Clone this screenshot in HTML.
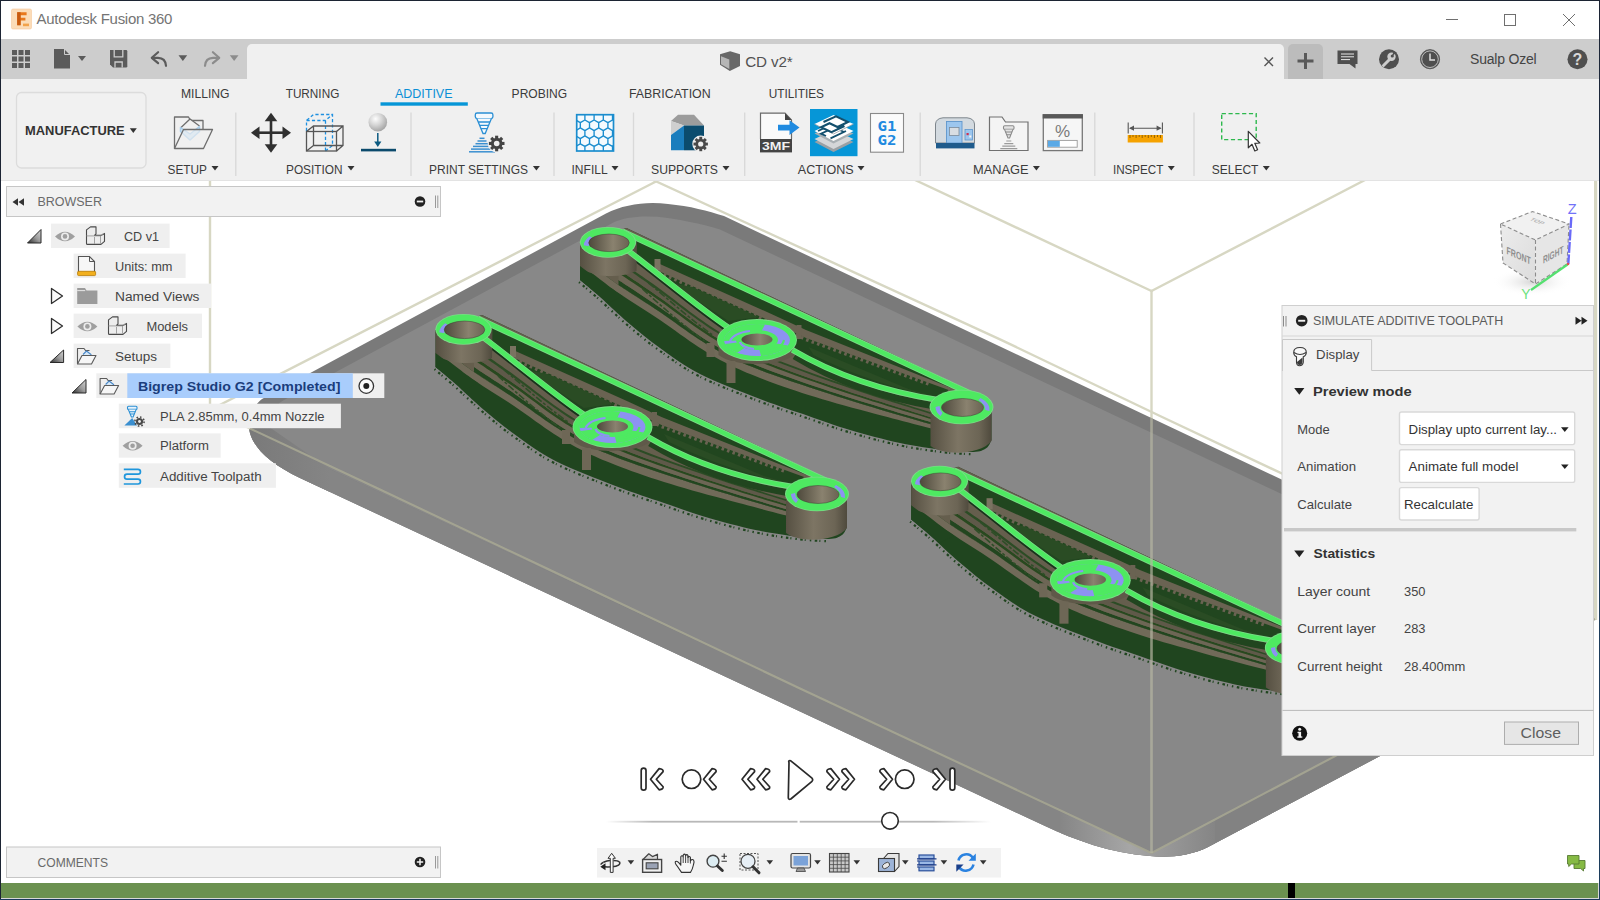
<!DOCTYPE html>
<html lang="en">
<head>
<meta charset="utf-8">
<title>Autodesk Fusion 360</title>
<style>
*{box-sizing:border-box;margin:0;padding:0}
html,body{width:1600px;height:900px;overflow:hidden;background:#fff}
body{font-family:"Liberation Sans",Arial,sans-serif;font-size:12px;color:#3c3c3c;position:relative}
.abs{position:absolute}
#win{position:absolute;left:0;top:0;width:1600px;height:900px;overflow:hidden;background:#fff}
#titlebar{position:absolute;left:1px;top:1px;width:1598px;height:38px;background:#fff}
#titletext{position:absolute;left:35.500px;top:9px;font-size:15px;color:#747474;white-space:nowrap;letter-spacing:-0.280px}
#qat{position:absolute;left:1px;top:39px;width:1598px;height:40px;background:#cdcdcd}
#doctab{position:absolute;left:246px;top:5px;width:1037px;height:35px;background:#f0f0f0;border-radius:5px 5px 0 0}
#toolbar{position:absolute;left:1px;top:79px;width:1598px;height:101px;background:#f0f0f0}
#viewport{position:absolute;left:1px;top:180px;width:1598px;height:703px;background:#fff;overflow:hidden}
#greenbar{position:absolute;left:1px;top:883px;width:1597px;height:15px;background:#6b9150}
.tlabel{position:absolute;font-size:12.5px;color:#3a3a3a;white-space:nowrap;letter-spacing:-0.2px}
.tab{position:absolute;top:7px;font-size:12.5px;color:#3a3a3a;white-space:nowrap;letter-spacing:-0.2px}
.sep{position:absolute;top:34px;width:1px;height:63px;background:#d6d6d6}
.caret{display:inline-block;width:0;height:0;border-left:3.5px solid transparent;border-right:3.5px solid transparent;border-top:5px solid #333;vertical-align:middle;margin-left:3px;position:relative;top:-1px}
</style>
</head>
<body>
<div id="win">
<!-- window borders -->
<div class="abs" style="left:0;top:0;width:1600px;height:1px;background:#1c2433"></div>
<div class="abs" style="left:0;top:0;width:1px;height:900px;background:#1c2433"></div>
<div class="abs" style="left:1598px;top:883px;width:1px;height:16px;background:#d8d8d8"></div>
<div class="abs" style="left:1599px;top:0;width:1px;height:900px;background:linear-gradient(#1c2333,#1c2a40 20%,#1c3c5c 60%,#1c3c5c)"></div>
<div class="abs" style="left:1px;top:898px;width:1598px;height:1px;background:#d8d8d8"></div>
<div class="abs" style="left:0;top:899px;width:1600px;height:1px;background:#1c3a5e"></div>

<div id="titlebar">
<svg class="abs" style="left:10px;top:7px" width="22" height="22" viewBox="0 0 22 22">
  <rect x="0.5" y="1" width="20" height="20" rx="1.5" fill="#fbdcb8"/>
  <rect x="0.5" y="1" width="20" height="20" rx="1.5" fill="none" stroke="#f6c89a" stroke-width="0.6"/>
  <path d="M6.2,4.2 L15.6,4.2 L15.6,7.2 L9.6,7.2 L9.6,9.8 L14.4,9.8 L14.4,12.6 L9.6,12.6 L9.6,17.2 L6.2,17.2 Z" fill="#e8781c"/>
  <path d="M6.2,4.2 L9.6,4.2 L9.6,17.2 L6.2,17.2 Z" fill="#c75a10"/>
  <rect x="12" y="15.6" width="6" height="2.6" fill="#f2a24a"/>
</svg>
<div id="titletext">Autodesk Fusion 360</div>
<svg class="abs" style="left:1440px;top:7px" width="150" height="24" viewBox="0 0 150 24" fill="none" stroke="#6f6f6f" stroke-width="1">
  <path d="M5,11.5 H17"/>
  <rect x="63.5" y="6.5" width="11" height="11"/>
  <path d="M122,6 L134,18 M134,6 L122,18"/>
</svg>

</div>

<div id="qat">
<div id="doctab"></div>
<div class="abs" style="left:1287px;top:5px;width:35px;height:35px;background:#bcbcbc;border-radius:5px 5px 0 0"></div>
<svg class="abs" style="left:0;top:0" width="1598" height="40" viewBox="1 39 1598 40">
  <!-- grid -->
  <g fill="#5b5b5b">
    <rect x="12" y="50" width="5" height="5"/><rect x="18.5" y="50" width="5" height="5"/><rect x="25" y="50" width="5" height="5"/>
    <rect x="12" y="56.5" width="5" height="5"/><rect x="18.5" y="56.5" width="5" height="5"/><rect x="25" y="56.5" width="5" height="5"/>
    <rect x="12" y="63" width="5" height="5"/><rect x="18.5" y="63" width="5" height="5"/><rect x="25" y="63" width="5" height="5"/>
  </g>
  <!-- file -->
  <path d="M54,49 H64 L70,55 V68.5 H54 Z" fill="#5b5b5b"/>
  <path d="M64.5,49 V54.5 H70" fill="none" stroke="#cdcdcd" stroke-width="1"/>
  <path d="M78,56 h8 l-4,5 z" fill="#5b5b5b"/>
  <!-- save -->
  <path d="M110,50 H126 Q127.300,50 127.300,51.300 V66.300 Q127.300,67.600 126,67.600 H113 L110,64.600 Z" fill="#5b5b5b"/>
  <path d="M114.200,50 V56.800 H122.800 V50" fill="none" stroke="#cdcdcd" stroke-width="1.300"/>
  <path d="M115,67.600 V62 H122.200 V67.600" fill="none" stroke="#cdcdcd" stroke-width="1.300"/>
  <!-- undo -->
  <path d="M158.100,52.200 L151.800,57.800 L158.100,63.200" fill="none" stroke="#5b5b5b" stroke-width="2.200" stroke-linecap="round" stroke-linejoin="round"/>
  <path d="M152.500,57.800 H158 Q165.500,58 166,65.800" fill="none" stroke="#5b5b5b" stroke-width="2.200" stroke-linecap="round"/>
  <path d="M178.500,55.200 h8.700 l-4.350,5.800 z" fill="#5b5b5b"/>
  <!-- redo -->
  <path d="M212.900,52.200 L219.200,57.800 L212.900,63.200" fill="none" stroke="#8c8c8c" stroke-width="2.200" stroke-linecap="round" stroke-linejoin="round"/>
  <path d="M218.500,57.800 H213 Q205.500,58 205,65.800" fill="none" stroke="#8c8c8c" stroke-width="2.200" stroke-linecap="round"/>
  <path d="M229.800,55.200 h8.700 l-4.350,5.800 z" fill="#8c8c8c"/>
  <!-- doc cube icon -->
  <path d="M720,54.300 L730.200,51.300 L740,54.300 V66 L729.800,70.900 L720,64.800 Z" fill="#686868"/>
  <path d="M721,56.300 L729.300,59.600 V69 L721,64.200 Z" fill="#b6b6b6"/>
  <!-- close x -->
  <path d="M1264.500,57.500 L1273,66 M1273,57.500 L1264.500,66" stroke="#555" stroke-width="1.4" fill="none"/>
  <!-- plus -->
  <path d="M1297.500,61 H1313.500 M1305.500,53 V69" stroke="#595959" stroke-width="3" fill="none"/>
  <!-- comment -->
  <path d="M1337.500,50.500 H1357.500 V64 H1355.500 V68.500 L1349.500,64 H1337.500 Z" fill="#4f4f4f"/>
  <path d="M1341,54 H1354 M1341,56.800 H1354 M1341,59.600 H1350" stroke="#e8e8e8" stroke-width="1" fill="none"/>
  <!-- job status (wrench circle) -->
  <circle cx="1389" cy="59.200" r="10" fill="#4f4f4f"/>
  <path d="M1383.500,65.500 L1389.500,59.500" stroke="#cdcdcd" stroke-width="3" stroke-linecap="round"/>
  <circle cx="1391.500" cy="56.800" r="4.200" fill="#cdcdcd"/>
  <path d="M1391.500,56.800 L1396.500,52.500 L1394,51 Z" fill="#4f4f4f"/>
  <circle cx="1392.300" cy="56" r="1.600" fill="#4f4f4f"/>
  <!-- clock -->
  <circle cx="1430" cy="59.200" r="9.600" fill="#4f4f4f" stroke="#4f4f4f" stroke-width="0.800"/>
  <circle cx="1430" cy="59.200" r="8.300" fill="none" stroke="#cdcdcd" stroke-width="0.900"/>
  <path d="M1430,53.500 V60 H1435" stroke="#e0e0e0" stroke-width="1.500" fill="none"/>
  <!-- help -->
  <circle cx="1577.500" cy="59.200" r="10" fill="#4f4f4f"/>
  <text x="1577.500" y="65" text-anchor="middle" font-family="Liberation Sans, sans-serif" font-weight="bold" font-size="16" fill="#d8d8d8">?</text>
</svg>
<div class="abs" style="left:744.300px;top:14px;font-size:15.200px;color:#525252;letter-spacing:-0.150px;white-space:nowrap" id="doctitle">CD v2*</div>
<div class="abs" style="left:1469px;top:12px;font-size:14px;color:#444;white-space:nowrap;letter-spacing:-0.2px" id="username">Sualp Ozel</div>

</div>

<div id="toolbar">
<svg class="abs" style="left:0;top:0" width="1598" height="101" viewBox="1 79 1598 101" font-family="Liberation Sans, Arial, sans-serif">
<rect x="16.500" y="92.500" width="129.500" height="75.500" rx="5" fill="#f1f1f1" stroke="#dcdcdc" stroke-width="1.300"/>
<text x="25.0" y="135.2" font-size="13" font-weight="bold" fill="#333" textLength="99.7" lengthAdjust="spacingAndGlyphs">MANUFACTURE</text>
<path d="M129.8,128.3 h7 l-3.5,4.600 z" fill="#333"/>
<text x="180.9" y="97.9" font-size="13" font-weight="normal" fill="#3b3b3b" textLength="48.7" lengthAdjust="spacingAndGlyphs">MILLING</text>
<text x="285.7" y="97.9" font-size="13" font-weight="normal" fill="#3b3b3b" textLength="53.6" lengthAdjust="spacingAndGlyphs">TURNING</text>
<text x="395.0" y="97.9" font-size="13" font-weight="normal" fill="#0a8fd6" textLength="57.5" lengthAdjust="spacingAndGlyphs">ADDITIVE</text>
<text x="511.6" y="97.9" font-size="13" font-weight="normal" fill="#3b3b3b" textLength="55.6" lengthAdjust="spacingAndGlyphs">PROBING</text>
<text x="628.9" y="97.9" font-size="13" font-weight="normal" fill="#3b3b3b" textLength="81.8" lengthAdjust="spacingAndGlyphs">FABRICATION</text>
<text x="768.7" y="97.9" font-size="13" font-weight="normal" fill="#3b3b3b" textLength="55.3" lengthAdjust="spacingAndGlyphs">UTILITIES</text>
<rect x="380.500" y="102.300" width="87.300" height="3.400" fill="#0696d7"/>
<rect x="235.1" y="112.500" width="1.400" height="63.500" fill="#d9d9d9"/>
<rect x="410.3" y="112.500" width="1.400" height="63.500" fill="#d9d9d9"/>
<rect x="553.3" y="112.500" width="1.400" height="63.500" fill="#d9d9d9"/>
<rect x="632.8" y="112.500" width="1.400" height="63.500" fill="#d9d9d9"/>
<rect x="744.0" y="112.500" width="1.400" height="63.500" fill="#d9d9d9"/>
<rect x="919.5" y="112.500" width="1.400" height="63.500" fill="#d9d9d9"/>
<rect x="1094.1" y="112.500" width="1.400" height="63.500" fill="#d9d9d9"/>
<rect x="1193.3" y="112.500" width="1.400" height="63.500" fill="#d9d9d9"/>
<text x="167.5" y="174.2" font-size="13" font-weight="normal" fill="#3b3b3b" textLength="39.4" lengthAdjust="spacingAndGlyphs">SETUP</text>
<path d="M211.5,165.9 h7 l-3.5,4.600 z" fill="#333"/>
<text x="286.0" y="174.2" font-size="13" font-weight="normal" fill="#3b3b3b" textLength="56.6" lengthAdjust="spacingAndGlyphs">POSITION</text>
<path d="M347.5,165.9 h7 l-3.5,4.600 z" fill="#333"/>
<text x="429.0" y="174.2" font-size="13" font-weight="normal" fill="#3b3b3b" textLength="99.0" lengthAdjust="spacingAndGlyphs">PRINT SETTINGS</text>
<path d="M532.9,165.9 h7 l-3.5,4.600 z" fill="#333"/>
<text x="571.5" y="174.2" font-size="13" font-weight="normal" fill="#3b3b3b" textLength="36.1" lengthAdjust="spacingAndGlyphs">INFILL</text>
<path d="M611.5,165.9 h7 l-3.5,4.600 z" fill="#333"/>
<text x="651.0" y="174.2" font-size="13" font-weight="normal" fill="#3b3b3b" textLength="67.0" lengthAdjust="spacingAndGlyphs">SUPPORTS</text>
<path d="M722.5,165.9 h7 l-3.5,4.600 z" fill="#333"/>
<text x="797.8" y="174.2" font-size="13" font-weight="normal" fill="#3b3b3b" textLength="55.9" lengthAdjust="spacingAndGlyphs">ACTIONS</text>
<path d="M857.5,165.9 h7 l-3.5,4.600 z" fill="#333"/>
<text x="973.0" y="174.2" font-size="13" font-weight="normal" fill="#3b3b3b" textLength="55.6" lengthAdjust="spacingAndGlyphs">MANAGE</text>
<path d="M1032.9,165.9 h7 l-3.5,4.600 z" fill="#333"/>
<text x="1112.9" y="174.2" font-size="13" font-weight="normal" fill="#3b3b3b" textLength="50.5" lengthAdjust="spacingAndGlyphs">INSPECT</text>
<path d="M1167.8,165.9 h7 l-3.5,4.600 z" fill="#333"/>
<text x="1211.7" y="174.2" font-size="13" font-weight="normal" fill="#3b3b3b" textLength="46.7" lengthAdjust="spacingAndGlyphs">SELECT</text>
<path d="M1262.8,165.9 h7 l-3.5,4.600 z" fill="#333"/>
<g fill="none" stroke="#6e6e6e" stroke-width="1.300" stroke-linejoin="round">
<path d="M174.500,148.500 V117 H188.500 L190.500,120.500 H203 V129.500"/>
<path d="M181,127.500 L190,119 L199.500,126" fill="#f0f0f0"/>
<path d="M180.500,127.500 V131.500 L190,140 L199.500,131.500 V126.500 L190,134 Z" fill="#cfe3f2" stroke="#a9cdea" stroke-width="1.500"/>
<path d="M174.500,148.500 L183.500,129.500 H212.500 L203.500,148.500 Z" fill="#f0f0f0" fill-opacity="0.550"/>
</g>
<g fill="#303030">
<rect x="257.0" y="131.4" width="28" height="2.600"/>
<rect x="269.7" y="118.7" width="2.600" height="28"/>
<path d="M251.0,132.7 l8.500,-6.300 v12.600 z"/>
<path d="M291.0,132.7 l-8.500,-6.300 v12.600 z"/>
<path d="M271.0,112.7 l-6.300,8.500 h12.600 z"/>
<path d="M271.0,152.7 l-6.300,-8.500 h12.600 z"/>
</g>
<g fill="none" stroke="#1e90e0" stroke-width="1.300" stroke-dasharray="3.200 2.200">
<path d="M306.500,131 V120.500 L313.500,114.500 H332.500 V145.500 L325.500,151"/>
<path d="M306.500,120.500 H325.500 L332.500,114.500 M325.500,120.500 V151"/>
</g>
<g fill="none" stroke="#555" stroke-width="1.300">
<rect x="306.500" y="131.500" width="30" height="19.500"/>
<path d="M306.500,131.500 L313.500,126 H343 V145.500 L336.500,151 M343,126 L336.500,131.500 M313.500,126 V145.500 H343 M313.500,145.500 L306.500,151"/>
</g>
<defs><radialGradient id="ballg" cx="0.380" cy="0.320" r="0.700"><stop offset="0" stop-color="#fdfdfd"/><stop offset="0.500" stop-color="#d4d4d4"/><stop offset="1" stop-color="#a4a4a4"/></radialGradient></defs>
<circle cx="377.800" cy="122.200" r="9.300" fill="url(#ballg)"/>
<path d="M377.800,133 V145" stroke="#0b5a80" stroke-width="1.500"/>
<path d="M374.200,141.500 L377.800,147 L381.400,141.500 Z" fill="#0b5a80"/>
<rect x="361" y="148.800" width="35" height="2.600" fill="#0b4a6c"/>
<g fill="none" stroke="#2b8fd4" stroke-width="1.300">
<rect x="475.300" y="113" width="17.600" height="5.600" rx="1.800" fill="#f4f9fd"/>
<path d="M476.800,118.600 L483,133.500 H485.200 L491.400,118.600" fill="#f4f9fd"/>
<path d="M478.300,122 H489.900 M479.700,125.300 H488.500 M481.100,128.600 H487.100"/>
</g>
<g stroke="#3a8fd0" stroke-width="1.500">
<path d="M479.5,138.3 h5.0"/>
<path d="M477.5,141.0 h9.0"/>
<path d="M475.5,143.7 h13.0"/>
<path d="M473.0,146.4 h18.0"/>
<path d="M471.0,149.1 h22.0"/>
<path d="M469.0,151.8 h26.0"/>
</g>
<circle cx="496.7" cy="143.5" r="9.0" fill="#f0f0f0"/>
<g fill="#444">
<circle cx="496.7" cy="143.5" r="5.8"/>
<rect x="495.1" y="135.7" width="3.1" height="15.6" transform="rotate(0 496.7 143.5)"/>
<rect x="495.1" y="135.7" width="3.1" height="15.6" transform="rotate(45 496.7 143.5)"/>
<rect x="495.1" y="135.7" width="3.1" height="15.6" transform="rotate(90 496.7 143.5)"/>
<rect x="495.1" y="135.7" width="3.1" height="15.6" transform="rotate(135 496.7 143.5)"/>




</g>
<circle cx="496.7" cy="143.5" r="2.8" fill="#f0f0f0"/>
<defs><clipPath id="hexclip"><rect x="576.700" y="114.700" width="36.800" height="36.300"/></clipPath></defs>
<rect x="576.700" y="114.700" width="36.800" height="36.300" fill="#f4fafe"/>
<path d="M580.30,111.99 L575.70,114.64 L571.10,111.99 L571.10,106.68 L575.70,104.02 L580.30,106.68 Z M589.50,111.99 L584.90,114.64 L580.30,111.99 L580.30,106.68 L584.90,104.02 L589.50,106.68 Z M598.70,111.99 L594.10,114.64 L589.50,111.99 L589.50,106.68 L594.10,104.02 L598.70,106.68 Z M607.90,111.99 L603.30,114.64 L598.70,111.99 L598.70,106.68 L603.30,104.02 L607.90,106.68 Z M617.10,111.99 L612.50,114.64 L607.90,111.99 L607.90,106.68 L612.50,104.02 L617.10,106.68 Z M626.30,111.99 L621.70,114.64 L617.10,111.99 L617.10,106.68 L621.70,104.02 L626.30,106.68 Z M635.50,111.99 L630.90,114.64 L626.30,111.99 L626.30,106.68 L630.90,104.02 L635.50,106.68 Z M575.70,119.96 L571.10,122.61 L566.50,119.96 L566.50,114.64 L571.10,111.99 L575.70,114.64 Z M584.90,119.96 L580.30,122.61 L575.70,119.96 L575.70,114.64 L580.30,111.99 L584.90,114.64 Z M594.10,119.96 L589.50,122.61 L584.90,119.96 L584.90,114.64 L589.50,111.99 L594.10,114.64 Z M603.30,119.96 L598.70,122.61 L594.10,119.96 L594.10,114.64 L598.70,111.99 L603.30,114.64 Z M612.50,119.96 L607.90,122.61 L603.30,119.96 L603.30,114.64 L607.90,111.99 L612.50,114.64 Z M621.70,119.96 L617.10,122.61 L612.50,119.96 L612.50,114.64 L617.10,111.99 L621.70,114.64 Z M630.90,119.96 L626.30,122.61 L621.70,119.96 L621.70,114.64 L626.30,111.99 L630.90,114.64 Z M580.30,127.92 L575.70,130.58 L571.10,127.92 L571.10,122.61 L575.70,119.96 L580.30,122.61 Z M589.50,127.92 L584.90,130.58 L580.30,127.92 L580.30,122.61 L584.90,119.96 L589.50,122.61 Z M598.70,127.92 L594.10,130.58 L589.50,127.92 L589.50,122.61 L594.10,119.96 L598.70,122.61 Z M607.90,127.92 L603.30,130.58 L598.70,127.92 L598.70,122.61 L603.30,119.96 L607.90,122.61 Z M617.10,127.92 L612.50,130.58 L607.90,127.92 L607.90,122.61 L612.50,119.96 L617.10,122.61 Z M626.30,127.92 L621.70,130.58 L617.10,127.92 L617.10,122.61 L621.70,119.96 L626.30,122.61 Z M635.50,127.92 L630.90,130.58 L626.30,127.92 L626.30,122.61 L630.90,119.96 L635.50,122.61 Z M575.70,135.89 L571.10,138.55 L566.50,135.89 L566.50,130.58 L571.10,127.92 L575.70,130.58 Z M584.90,135.89 L580.30,138.55 L575.70,135.89 L575.70,130.58 L580.30,127.92 L584.90,130.58 Z M594.10,135.89 L589.50,138.55 L584.90,135.89 L584.90,130.58 L589.50,127.92 L594.10,130.58 Z M603.30,135.89 L598.70,138.55 L594.10,135.89 L594.10,130.58 L598.70,127.92 L603.30,130.58 Z M612.50,135.89 L607.90,138.55 L603.30,135.89 L603.30,130.58 L607.90,127.92 L612.50,130.58 Z M621.70,135.89 L617.10,138.55 L612.50,135.89 L612.50,130.58 L617.10,127.92 L621.70,130.58 Z M630.90,135.89 L626.30,138.55 L621.70,135.89 L621.70,130.58 L626.30,127.92 L630.90,130.58 Z M580.30,143.86 L575.70,146.51 L571.10,143.86 L571.10,138.55 L575.70,135.89 L580.30,138.55 Z M589.50,143.86 L584.90,146.51 L580.30,143.86 L580.30,138.55 L584.90,135.89 L589.50,138.55 Z M598.70,143.86 L594.10,146.51 L589.50,143.86 L589.50,138.55 L594.10,135.89 L598.70,138.55 Z M607.90,143.86 L603.30,146.51 L598.70,143.86 L598.70,138.55 L603.30,135.89 L607.90,138.55 Z M617.10,143.86 L612.50,146.51 L607.90,143.86 L607.90,138.55 L612.50,135.89 L617.10,138.55 Z M626.30,143.86 L621.70,146.51 L617.10,143.86 L617.10,138.55 L621.70,135.89 L626.30,138.55 Z M635.50,143.86 L630.90,146.51 L626.30,143.86 L626.30,138.55 L630.90,135.89 L635.50,138.55 Z M575.70,151.83 L571.10,154.48 L566.50,151.83 L566.50,146.51 L571.10,143.86 L575.70,146.51 Z M584.90,151.83 L580.30,154.48 L575.70,151.83 L575.70,146.51 L580.30,143.86 L584.90,146.51 Z M594.10,151.83 L589.50,154.48 L584.90,151.83 L584.90,146.51 L589.50,143.86 L594.10,146.51 Z M603.30,151.83 L598.70,154.48 L594.10,151.83 L594.10,146.51 L598.70,143.86 L603.30,146.51 Z M612.50,151.83 L607.90,154.48 L603.30,151.83 L603.30,146.51 L607.90,143.86 L612.50,146.51 Z M621.70,151.83 L617.10,154.48 L612.50,151.83 L612.50,146.51 L617.10,143.86 L621.70,146.51 Z M630.90,151.83 L626.30,154.48 L621.70,151.83 L621.70,146.51 L626.30,143.86 L630.90,146.51 Z M580.30,159.79 L575.70,162.45 L571.10,159.79 L571.10,154.48 L575.70,151.83 L580.30,154.48 Z M589.50,159.79 L584.90,162.45 L580.30,159.79 L580.30,154.48 L584.90,151.83 L589.50,154.48 Z M598.70,159.79 L594.10,162.45 L589.50,159.79 L589.50,154.48 L594.10,151.83 L598.70,154.48 Z M607.90,159.79 L603.30,162.45 L598.70,159.79 L598.70,154.48 L603.30,151.83 L607.90,154.48 Z M617.10,159.79 L612.50,162.45 L607.90,159.79 L607.90,154.48 L612.50,151.83 L617.10,154.48 Z M626.30,159.79 L621.70,162.45 L617.10,159.79 L617.10,154.48 L621.70,151.83 L626.30,154.48 Z M635.50,159.79 L630.90,162.45 L626.30,159.79 L626.30,154.48 L630.90,151.83 L635.50,154.48 Z M575.70,167.76 L571.10,170.42 L566.50,167.76 L566.50,162.45 L571.10,159.79 L575.70,162.45 Z M584.90,167.76 L580.30,170.42 L575.70,167.76 L575.70,162.45 L580.30,159.79 L584.90,162.45 Z M594.10,167.76 L589.50,170.42 L584.90,167.76 L584.90,162.45 L589.50,159.79 L594.10,162.45 Z M603.30,167.76 L598.70,170.42 L594.10,167.76 L594.10,162.45 L598.70,159.79 L603.30,162.45 Z M612.50,167.76 L607.90,170.42 L603.30,167.76 L603.30,162.45 L607.90,159.79 L612.50,162.45 Z M621.70,167.76 L617.10,170.42 L612.50,167.76 L612.50,162.45 L617.10,159.79 L621.70,162.45 Z M630.90,167.76 L626.30,170.42 L621.70,167.76 L621.70,162.45 L626.30,159.79 L630.90,162.45 Z" fill="none" stroke="#1b8dce" stroke-width="1.350" clip-path="url(#hexclip)"/>
<rect x="576.700" y="114.700" width="36.800" height="36.300" fill="none" stroke="#1b8dce" stroke-width="1.700"/>
<path d="M671,121 L678,114.800 H694 L704,125.500 H684 Z" fill="#9c9c9c"/>
<path d="M671,121 L684,125.500 L671,135 Z" fill="#cfcfcf"/>
<path d="M671,135 L684,125.500 V150.300 H671 Z" fill="#1a7dbd"/>
<path d="M684,125.500 H704 V150.300 H684 Z" fill="#0b4c6e"/>
<circle cx="700.7" cy="144.0" r="8.4" fill="#f0f0f0"/>
<g fill="#4a4a4a">
<circle cx="700.7" cy="144.0" r="5.3"/>
<rect x="699.3" y="136.8" width="2.9" height="14.4" transform="rotate(0 700.7 144.0)"/>
<rect x="699.3" y="136.8" width="2.9" height="14.4" transform="rotate(45 700.7 144.0)"/>
<rect x="699.3" y="136.8" width="2.9" height="14.4" transform="rotate(90 700.7 144.0)"/>
<rect x="699.3" y="136.8" width="2.9" height="14.4" transform="rotate(135 700.7 144.0)"/>




</g>
<circle cx="700.7" cy="144.0" r="2.6" fill="#f0f0f0"/>
<path d="M760.500,139 V113.200 H785 L791.500,120 V139" fill="#fafafa" stroke="#6a6a6a" stroke-width="1.200"/>
<path d="M785,113.200 V120 H791.500 Z" fill="#444"/>
<rect x="760" y="139" width="32" height="13.400" fill="#444"/>
<text x="776" y="150.300" font-size="11.500" font-weight="bold" fill="#f2f2f2" text-anchor="middle" textLength="28" lengthAdjust="spacingAndGlyphs">3MF</text>
<path d="M778,124.800 H789.500 V120.300 L799.500,127.600 L789.500,135 V130.400 H778 Z" fill="#1f8ae0"/>
<rect x="810" y="109" width="47.500" height="47.200" fill="#0696d7"/>
<path d="M814.500,142 L833.500,133 L853.500,142 L833.500,152 Z" fill="#9aa0a4"/>
<path d="M814.500,139 L833.500,130 L853.500,139 L833.500,149 Z" fill="#d4d6d8"/>
<path d="M814.500,133.500 L833.500,124.500 L853.500,133.500 L833.500,143.500 Z" fill="#a9b0b4"/>
<path d="M814.500,131 L833.500,122 L853.500,131 L833.500,141 Z" fill="#ffffff"/>
<path d="M818,131 L833,124 M826,136 L821,133.700 L834.500,127.500 L844,132 M830.500,138.300 L846,131" fill="none" stroke="#14506e" stroke-width="1.900"/>
<path d="M814.500,124 L833.500,115 L853.500,124 L833.500,134 Z" fill="#ffffff"/>
<path d="M814.500,124 L833.500,134 L853.500,124" fill="none" stroke="#9aa0a4" stroke-width="0.800"/>
<path d="M823.500,122 L836,116.300 L848,122 L837.500,127 L829.500,123.200 L821,127.200 L831.500,132.200 L844.500,126" fill="none" stroke="#14506e" stroke-width="2.100"/>
<rect x="870.500" y="113.500" width="33" height="38.700" fill="#fbfbfb" stroke="#8a8a8a" stroke-width="1.100"/>
<text x="887" y="131.300" font-family="DejaVu Sans Mono, Liberation Mono, monospace" font-size="13.500" font-weight="bold" fill="#1f8ae0" text-anchor="middle" textLength="19" lengthAdjust="spacingAndGlyphs">G1</text>
<text x="887" y="145.300" font-family="DejaVu Sans Mono, Liberation Mono, monospace" font-size="13.500" font-weight="bold" fill="#1f8ae0" text-anchor="middle" textLength="19" lengthAdjust="spacingAndGlyphs">G2</text>
<path d="M935.500,143 V124 Q936,118.500 943,117.800 H967 Q974,118.500 974.500,124 V143 Z" fill="#d3dae0" stroke="#7d858c" stroke-width="1"/>
<rect x="946.500" y="121.500" width="15.500" height="21.500" fill="#9cc6ee" stroke="#5f96cc" stroke-width="0.900"/>
<rect x="949.500" y="127.500" width="9.500" height="8" fill="#d8dde2" stroke="#7a8a9a" stroke-width="0.800"/>
<rect x="965" y="129.500" width="7.500" height="10.500" fill="#9cc6ee" stroke="#5f96cc" stroke-width="0.800"/>
<rect x="966.500" y="133" width="2.200" height="2.200" fill="#d03050"/><rect x="969.300" y="135.500" width="2" height="2" fill="#f4f4f4"/>
<rect x="936" y="143" width="38.500" height="5.400" fill="#1f5b8c"/>
<path d="M989.500,150.500 V117 H1002 L1005.500,122 H1028 V150.500 Z" fill="#f4f4f4" stroke="#707070" stroke-width="1.200"/>
<g fill="none" stroke="#8a8a8a" stroke-width="1.100"><rect x="1003.500" y="125.800" width="10.500" height="3.600" rx="1.200" fill="#e4e4e4"/><path d="M1004.500,129.400 L1008,138 H1009.600 L1013,129.400" fill="#e4e4e4"/><path d="M1005.500,132 H1012 M1006.600,134.700 H1011"/></g>
<g stroke="#9a9a9a" stroke-width="1.200"><path d="M1006.300,141 h5 M1004.300,143.600 h9 M1002.300,146.200 h13 M1000.300,148.700 h17"/></g>
<rect x="1043.300" y="114.800" width="39" height="35.800" fill="#f6f6f6" stroke="#777" stroke-width="1.300"/>
<rect x="1042.700" y="114.200" width="40.200" height="4.300" fill="#595959"/>
<text x="1062.500" y="136.500" font-size="17" fill="#7a7a7a" text-anchor="middle">%</text>
<rect x="1047.600" y="140.400" width="29.600" height="6.800" fill="#fff" stroke="#9a9a9a" stroke-width="0.900"/>
<rect x="1048" y="140.800" width="11.800" height="6" fill="#5aa9e6"/>
<rect x="1127.700" y="135" width="35.200" height="7.500" fill="#f5a200"/>
<g stroke="#8a5a00" stroke-width="0.900"><path d="M1130.0,135 v3.0"/><path d="M1133.0,135 v2.0"/><path d="M1136.1,135 v3.0"/><path d="M1139.2,135 v2.0"/><path d="M1142.2,135 v3.0"/><path d="M1145.2,135 v2.0"/><path d="M1148.3,135 v3.0"/><path d="M1151.3,135 v2.0"/><path d="M1154.4,135 v3.0"/><path d="M1157.5,135 v2.0"/><path d="M1160.5,135 v3.0"/></g>
<g stroke="#555" stroke-width="1.100" fill="none"><path d="M1128.200,122.500 V133.500 M1162.400,122.500 V133.500 M1130,128.200 H1160.500"/></g>
<path d="M1129,128.200 l5,-2.600 v5.200 z M1161.600,128.200 l-5,-2.600 v5.200 z" fill="#555"/>
<rect x="1221.700" y="113.600" width="34.500" height="26" fill="none" stroke="#2db84d" stroke-width="1.400" stroke-dasharray="4.200 2.600"/>
<path d="M1248.300,131.300 V147.800 L1252,144.300 L1254.800,151 L1257.600,149.800 L1254.800,143.300 L1259.800,143 Z" fill="#fff" stroke="#333" stroke-width="1.200" stroke-linejoin="round"/>
</svg>
</div>

<div id="viewport">
<div class="abs" id="vline" style="left:0;top:0;width:1598px;height:1px;background:#e3e3e3;z-index:5"></div>
<svg width="1600" height="900" viewBox="0 0 1600 900" style="position:absolute;left:-1px;top:-180px">
<defs>
<linearGradient id="cyl" x1="0" x2="1" y1="0" y2="0">
 <stop offset="0" stop-color="#565042"/><stop offset="0.45" stop-color="#7d7564"/><stop offset="0.8" stop-color="#6c6555"/><stop offset="1" stop-color="#4f4a3d"/>
</linearGradient>
<linearGradient id="hole" x1="0" x2="1" y1="0" y2="0">
 <stop offset="0" stop-color="#4e493c"/><stop offset="0.6" stop-color="#8a826f"/><stop offset="1" stop-color="#6a6353"/>
</linearGradient>
<linearGradient id="cornerg" x1="0" x2="1" y1="0" y2="0">
 <stop offset="0" stop-color="#868686"/><stop offset="0.45" stop-color="#a6a6a6"/><stop offset="0.62" stop-color="#9c9c9c"/><stop offset="1" stop-color="#858585"/>
</linearGradient>
<linearGradient id="leftg" x1="0" x2="1" y1="0" y2="0">
 <stop offset="0" stop-color="#777"/><stop offset="1" stop-color="#858585"/>
</linearGradient>
</defs>
<g stroke="#d7d7c3" stroke-width="2.400" fill="none" stroke-linecap="round">
<path d="M1151.5,291 L915,180 L700,79"/>
<path d="M1151.5,291 L1151.5,420"/>
<path d="M1151.5,291 L1365,180 L1600,58"/>
<path d="M210,410 L656,181.5"/>
<path d="M653,180 L1000,339.3 L1160,416 L1300,482"/>
<path d="M210,170 L210,410"/>
<path d="M1595.6,181 L1595.6,620" stroke-width="3.2" stroke-linecap="butt"/>
</g>
<path d="M250,433 C247,424 250,408 262,399 L606,213.500 C624,204 648,201 668,204 C690,206 708,211 724,216 L1540,601.500 C1568,615 1590,624 1590,633 C1590,641 1576,650 1556,663 L1208,847 C1190,856 1168,858 1150,856 C1110,853 1075,840 1045,826 L300,478 C270,464 254,448 250,433 Z" fill="#7a7a7a"/>
<clipPath id="pc"><path d="M250,433 C247,424 250,408 262,399 L606,213.500 C624,204 648,201 668,204 C690,206 708,211 724,216 L1540,601.500 C1568,615 1590,624 1590,633 C1590,641 1576,650 1556,663 L1208,847 C1190,856 1168,858 1150,856 C1110,853 1075,840 1045,826 L300,478 C270,464 254,448 250,433 Z"/></clipPath>
<g clip-path="url(#pc)">
<path d="M266,432 C264,422 270,408 284,400 L612,223.300 C630,214 660,215 690,222 C700,224 710,226 720,229.500 L1600,644 L1600,900 L1151.5,853 L250,432 Z" fill="#888888"/>
<path d="M210,413 L1151.5,853 L1151.5,900 L200,900 Z" fill="#858585"/>
<path d="M1151.5,853 L1600,616 L1600,900 L1151.5,900 Z" fill="#828282"/>
<path d="M230,400 L330,469 L330,520 L230,470 Z" fill="url(#leftg)"/>
<path d="M1060,810 L1151.5,853 L1215,819 L1215,900 L1060,900 Z" fill="url(#cornerg)"/>
</g>
<g stroke="#a6a692" stroke-width="2.100" fill="none" opacity="0.900">
<path d="M250,428.500 L380,489.500 L540,565.300 L800,688.500 L1151.5,853"/>
<path d="M1151.5,853 L1595,619"/>
</g>
<path d="M210,410 L250,428.500" stroke="#d7d7c3" stroke-width="2" fill="none"/>
<g transform="translate(608.5,243) scale(1)">
<path d="M-28.5,0 L-28.5,37 C-25.2,39.8 -16.6,46.8 -8.5,54.0 C-0.4,61.2 10.0,71.5 20.0,80.0 C30.0,88.5 39.6,96.5 51.5,105.0 C63.4,113.5 74.8,122.5 91.5,131.0 C108.2,139.5 133.4,149.0 151.5,156.0 C169.6,163.0 185.0,167.8 200.0,173.0 C215.0,178.2 226.2,182.5 241.5,187.0 C256.8,191.5 275.8,196.7 291.5,200.0 C307.2,203.3 323.2,205.5 335.5,207.0 C347.8,208.5 357.9,209.3 365.0,209.0 C372.1,208.7 375.0,207.0 378.0,205.0 C381.0,203.0 382.2,198.3 383.0,197.0 L383,164 L366,150 L18,-15 Z" fill="#20451f"/>
<path d="M-28.5,37 C-25.2,39.8 -16.6,46.8 -8.5,54.0 C-0.4,61.2 10.0,71.5 20.0,80.0 C30.0,88.5 39.6,96.5 51.5,105.0 C63.4,113.5 74.8,122.5 91.5,131.0 C108.2,139.5 133.4,149.0 151.5,156.0 C169.6,163.0 185.0,167.8 200.0,173.0 C215.0,178.2 226.2,182.5 241.5,187.0 C256.8,191.5 275.8,196.7 291.5,200.0 C307.2,203.3 323.2,205.5 335.5,207.0 C347.8,208.5 360.1,208.7 365.0,209.0" fill="none" stroke="#20451f" stroke-width="2.2" stroke-dasharray="1.5 3.5 2.5 2 1 4" transform="translate(-1,2.2)"/>
<path d="M-27,0 L-27,14 C-20.8,18.7 -3.1,32.8 10.0,42.0 C23.1,51.2 38.2,60.0 51.5,69.0 C64.8,78.0 78.7,88.7 90.0,96.0 C101.3,103.3 109.2,107.8 119.5,113.0 C129.8,118.2 138.1,121.8 151.5,127.0 C164.9,132.2 181.9,138.0 200.0,144.0 C218.1,150.0 237.4,156.2 260.0,163.0 C282.6,169.8 318.8,180.2 335.5,185.0 C352.2,189.8 355.9,190.8 360.0,192.0 L383,164 L366,150 L18,-15 Z" fill="#655e4d"/>
<path d="M-27.0,14.0 C-20.8,18.7 -3.1,32.8 10.0,42.0 C23.1,51.2 38.2,60.0 51.5,69.0 C64.8,78.0 78.7,88.7 90.0,96.0 C101.3,103.3 109.2,107.8 119.5,113.0 C129.8,118.2 138.1,121.8 151.5,127.0 C164.9,132.2 181.9,138.0 200.0,144.0 C218.1,150.0 237.4,156.2 260.0,163.0 C282.6,169.8 318.8,180.2 335.5,185.0 C352.2,189.8 355.9,190.8 360.0,192.0 L360.0,195.0 C355.9,194.0 352.2,193.1 335.5,188.8 C318.8,184.5 282.6,175.3 260.0,169.1 C237.4,163.0 218.1,157.7 200.0,152.0 C181.9,146.3 164.9,140.2 151.5,135.0 C138.1,129.8 129.8,126.2 119.5,121.0 C109.2,115.8 101.3,111.3 90.0,104.0 C78.7,96.7 64.8,86.0 51.5,77.0 C38.2,68.0 23.1,59.2 10.0,50.0 C-3.1,40.8 -20.8,26.7 -27.0,22.0 Z" fill="#716a59"/>
<path d="M10.0,42.0 C16.9,46.5 38.2,60.0 51.5,69.0 C64.8,78.0 78.7,88.7 90.0,96.0 C101.3,103.3 109.2,107.8 119.5,113.0 C129.8,118.2 138.1,121.8 151.5,127.0 C164.9,132.2 181.9,138.0 200.0,144.0 C218.1,150.0 237.4,156.2 260.0,163.0 C282.6,169.8 318.8,180.2 335.5,185.0 C352.2,189.8 355.9,190.8 360.0,192.0 L360.0,190.5 C355.9,189.3 352.2,188.0 335.5,183.1 C318.8,178.1 282.6,167.6 260.0,160.6 C237.4,153.6 218.1,147.3 200.0,141.2 C181.9,135.0 164.9,129.1 151.5,123.8 C138.1,118.4 129.8,114.6 119.5,109.3 C109.2,104.0 101.3,99.4 90.0,91.9 C78.7,84.4 64.8,73.6 51.5,64.4 C38.2,55.3 16.9,41.6 10.0,37.0 Z" fill="#22461f"/>
<path d="M10.0,37.0 C16.9,41.6 38.2,55.3 51.5,64.4 C64.8,73.6 78.7,84.4 90.0,91.9 C101.3,99.4 109.2,104.0 119.5,109.3 C129.8,114.6 138.1,118.4 151.5,123.8 C164.9,129.1 181.9,135.0 200.0,141.2 C218.1,147.3 237.4,153.6 260.0,160.6 C282.6,167.6 318.8,178.1 335.5,183.1 C352.2,188.0 355.9,189.3 360.0,190.5 L360.0,188.0 C355.9,186.7 352.2,185.2 335.5,180.0 C318.8,174.8 282.6,164.2 260.0,157.0 C237.4,149.8 218.1,143.3 200.0,137.0 C181.9,130.7 164.9,124.5 151.5,119.0 C138.1,113.5 129.8,109.5 119.5,104.0 C109.2,98.5 101.3,93.7 90.0,86.0 C78.7,78.3 64.8,67.3 51.5,58.0 C38.2,48.7 16.9,34.7 10.0,30.0 Z" fill="#6d6655"/>
<path d="M10.0,30.0 C16.9,34.7 38.2,48.7 51.5,58.0 C64.8,67.3 78.7,78.3 90.0,86.0 C101.3,93.7 109.2,98.5 119.5,104.0 C129.8,109.5 138.1,113.5 151.5,119.0 C164.9,124.5 181.9,130.7 200.0,137.0 C218.1,143.3 237.4,149.8 260.0,157.0 C282.6,164.2 318.8,174.8 335.5,180.0 C352.2,185.2 355.9,186.7 360.0,188.0 L360.0,186.5 C355.9,185.1 352.2,183.5 335.5,178.2 C318.8,173.0 282.6,162.2 260.0,155.0 C237.4,147.8 218.1,141.2 200.0,134.8 C181.9,128.3 164.9,122.1 151.5,116.5 C138.1,110.9 129.8,106.8 119.5,101.2 C109.2,95.7 101.3,90.8 90.0,83.0 C78.7,75.2 64.8,64.2 51.5,54.8 C38.2,45.3 16.9,31.2 10.0,26.5 Z" fill="#28491f"/>
<path d="M10.0,26.5 C16.9,31.2 38.2,45.3 51.5,54.8 C64.8,64.2 78.7,75.2 90.0,83.0 C101.3,90.8 109.2,95.7 119.5,101.2 C129.8,106.8 138.1,110.9 151.5,116.5 C164.9,122.1 181.9,128.3 200.0,134.8 C218.1,141.2 237.4,147.8 260.0,155.0 C282.6,162.2 318.8,173.0 335.5,178.2 C352.2,183.5 355.9,185.1 360.0,186.5 L360.0,184.0 C355.9,182.5 352.2,180.7 335.5,175.2 C318.8,169.8 282.6,158.9 260.0,151.5 C237.4,144.1 218.1,137.3 200.0,130.8 C181.9,124.2 164.9,117.8 151.5,112.0 C138.1,106.2 129.8,102.0 119.5,96.2 C109.2,90.5 101.3,85.4 90.0,77.5 C78.7,69.6 64.8,58.3 51.5,48.8 C38.2,39.2 16.9,24.8 10.0,20.0 Z" fill="#5f5949"/>
<path d="M10.0,20.0 C16.9,24.8 38.2,39.2 51.5,48.8 C64.8,58.3 78.7,69.6 90.0,77.5 C101.3,85.4 109.2,90.5 119.5,96.2 C129.8,102.0 138.1,106.2 151.5,112.0 C164.9,117.8 181.9,124.2 200.0,130.8 C218.1,137.3 237.4,144.1 260.0,151.5 C282.6,158.9 318.8,169.8 335.5,175.2 C352.2,180.7 355.9,182.5 360.0,184.0 L360.0,182.5 C355.9,181.0 352.2,179.0 335.5,173.6 C318.8,168.1 282.6,157.1 260.0,149.6 C237.4,142.1 218.1,135.3 200.0,128.7 C181.9,122.0 164.9,115.6 151.5,109.8 C138.1,103.9 129.8,99.6 119.5,93.8 C109.2,88.0 101.3,82.9 90.0,74.9 C78.7,66.9 64.8,55.6 51.5,45.9 C38.2,36.3 16.9,21.8 10.0,17.0 Z" fill="#2c4c25"/>
<path d="M40,40 C62,58 84,78 104,92 M34,46 C54,64 74,82 96,98" stroke="#2e4e27" stroke-width="1.6" fill="none" stroke-dasharray="7 2 3 2"/>
<path d="M30,-4 L342,144 L332,158 Q247,144 184,107 C176,88 150,76 122,86 L20,8 Z" fill="#21461f"/>
<path d="M48,19.500 L164,71.500 L197.500,87 L341.500,144.500 L341.500,147.500 L197.500,95 L164,79 L48,27 Z" fill="#6a6352"/>
<path d="M50,29 L164,80.500 L197.500,96.500 L320,141" stroke="#6a6352" stroke-width="3.400" stroke-dasharray="2.600 3.200" fill="none"/>
<path d="M62,40 L120,78 L150,74 L84,44 Z" fill="#2a4c24"/>
<path d="M200,104 L300,146 L330,155 Q260,140 205,112 Z" fill="#2a4c24"/>
<path d="M20,12 C58,41 92,70 122,90" stroke="#17341a" stroke-width="3" fill="none"/>
<path d="M186,113 Q247,150 326,163" stroke="#21451f" stroke-width="7" fill="none"/>
<rect x="46" y="16" width="6" height="11" fill="#7a7361"/>
<rect x="188" y="82" width="5" height="14" fill="#6a6352"/>
<rect x="98" y="100" width="8" height="14" fill="#6e6756"/>
<path d="M-28.5,0 L-28.5,24 C-20,33 10,37 28,28 L28.5,0 Z" fill="url(#cyl)"/>
<path d="M-28.5,23 L-10,37 L14,53 L0,60 L-28.5,37 Z" fill="#20451f"/>
<path d="M-22,20 L-22,40 L20,60 L40,60 L40,40 Z" fill="#20451f" opacity="0"/>
<path d="M322,164 L322,203 C335,213 372,212 383,198 L383,164 Z" fill="url(#cyl)"/>
<path d="M110,97 L110,112 C125,124 170,124 186,112 L186,97 Z" fill="#5f5949"/>
<rect x="118" y="118" width="9" height="22" fill="#6e6756"/>
<path d="M14,-11.5 L364,151.5" stroke="#79dc86" stroke-width="5.900" fill="none" stroke-linecap="butt"/>
<path d="M20,8 C58,37 92,66 122,86" stroke="#79dc86" stroke-width="5.900" fill="none" stroke-linecap="butt"/>
<path d="M184,107 Q247,144 330,157" stroke="#79dc86" stroke-width="5.900" fill="none" stroke-linecap="butt"/>
<path d="M14,-11.5 L364,151.5" stroke="#4ee961" stroke-width="4.200" fill="none" stroke-linecap="butt"/>
<path d="M20,8 C58,37 92,66 122,86" stroke="#4ee961" stroke-width="4.200" fill="none" stroke-linecap="butt"/>
<path d="M184,107 Q247,144 330,157" stroke="#4ee961" stroke-width="4.200" fill="none" stroke-linecap="butt"/>
<ellipse cx="-0.5" cy="-0.7" rx="28.2" ry="15.4" fill="#79dc86"/>
<ellipse cx="-0.5" cy="-0.7" rx="27.2" ry="14.6" fill="#4ee961"/>
<path d="M-24.7,2.3 a27.2,14.6 0 0 1 6,-9 l3,2 a27.2,14.6 0 0 0 -4,8 z" fill="#8d92f2"/>
<ellipse cx="0.5" cy="-0.2" rx="20.3" ry="8.8" fill="url(#hole)"/>
<ellipse cx="0.5" cy="-0.2" rx="20.3" ry="8.8" fill="none" stroke="#3e3a30" stroke-width="0.8" opacity="0.6"/>
<ellipse cx="353" cy="164" rx="32" ry="17.3" fill="#79dc86"/>
<ellipse cx="353" cy="164" rx="31" ry="16.5" fill="#4ee961"/>
<path d="M372,155 a31,16.5 0 0 1 9,13 l-4,-1 a31,16.5 0 0 0 -7,-10 z" fill="#8d92f2"/>
<path d="M327,164 a31,16.5 0 0 0 5,9 l2,-3 a31,16.5 0 0 1 -3,-7 z" fill="#8d92f2"/>
<ellipse cx="354" cy="164.5" rx="21" ry="9" fill="url(#hole)"/>
<ellipse cx="354" cy="164.5" rx="21" ry="9" fill="none" stroke="#3e3a30" stroke-width="0.8" opacity="0.6"/>
<ellipse cx="148.5" cy="97" rx="40" ry="21" fill="#79dc86"/>
<ellipse cx="148.5" cy="97" rx="39" ry="20" fill="#4ee961"/>
<ellipse cx="148.5" cy="97" rx="33" ry="16" fill="#8d92f2"/>
<path d="M148.5,97 L115.5,98 A33,16 0 0 1 156.5,81.4 Z" fill="#4ee961"/>
<path d="M148.5,97 L179.5,102.5 A33,16 0 0 1 152.5,113 Z" fill="#4ee961"/>
<path d="M148.5,97 L128.5,109.8 A33,16 0 0 1 116.5,101 Z" fill="#4ee961"/>
<ellipse cx="148.5" cy="97" rx="21" ry="10" fill="#4ee961"/>
<path d="M121.5,98 a27,13 0 0 1 20,-10" fill="none" stroke="#8d92f2" stroke-width="2"/>
<path d="M175.5,97 a27,13 0 0 1 -16,11" fill="none" stroke="#4ee961" stroke-width="2"/>
<path d="M131.5,99 a18,8 0 0 0 14,7" fill="none" stroke="#8d92f2" stroke-width="2.2"/>
<ellipse cx="148.5" cy="96.5" rx="15.5" ry="6" fill="url(#hole)"/>
</g>
<g transform="translate(464,330) scale(1)">
<path d="M-28.5,0 L-28.5,37 C-25.2,39.8 -16.6,46.8 -8.5,54.0 C-0.4,61.2 10.0,71.5 20.0,80.0 C30.0,88.5 39.6,96.5 51.5,105.0 C63.4,113.5 74.8,122.5 91.5,131.0 C108.2,139.5 133.4,149.0 151.5,156.0 C169.6,163.0 185.0,167.8 200.0,173.0 C215.0,178.2 226.2,182.5 241.5,187.0 C256.8,191.5 275.8,196.7 291.5,200.0 C307.2,203.3 323.2,205.5 335.5,207.0 C347.8,208.5 357.9,209.3 365.0,209.0 C372.1,208.7 375.0,207.0 378.0,205.0 C381.0,203.0 382.2,198.3 383.0,197.0 L383,164 L366,150 L18,-15 Z" fill="#20451f"/>
<path d="M-28.5,37 C-25.2,39.8 -16.6,46.8 -8.5,54.0 C-0.4,61.2 10.0,71.5 20.0,80.0 C30.0,88.5 39.6,96.5 51.5,105.0 C63.4,113.5 74.8,122.5 91.5,131.0 C108.2,139.5 133.4,149.0 151.5,156.0 C169.6,163.0 185.0,167.8 200.0,173.0 C215.0,178.2 226.2,182.5 241.5,187.0 C256.8,191.5 275.8,196.7 291.5,200.0 C307.2,203.3 323.2,205.5 335.5,207.0 C347.8,208.5 360.1,208.7 365.0,209.0" fill="none" stroke="#20451f" stroke-width="2.2" stroke-dasharray="1.5 3.5 2.5 2 1 4" transform="translate(-1,2.2)"/>
<path d="M-27,0 L-27,14 C-20.8,18.7 -3.1,32.8 10.0,42.0 C23.1,51.2 38.2,60.0 51.5,69.0 C64.8,78.0 78.7,88.7 90.0,96.0 C101.3,103.3 109.2,107.8 119.5,113.0 C129.8,118.2 138.1,121.8 151.5,127.0 C164.9,132.2 181.9,138.0 200.0,144.0 C218.1,150.0 237.4,156.2 260.0,163.0 C282.6,169.8 318.8,180.2 335.5,185.0 C352.2,189.8 355.9,190.8 360.0,192.0 L383,164 L366,150 L18,-15 Z" fill="#655e4d"/>
<path d="M-27.0,14.0 C-20.8,18.7 -3.1,32.8 10.0,42.0 C23.1,51.2 38.2,60.0 51.5,69.0 C64.8,78.0 78.7,88.7 90.0,96.0 C101.3,103.3 109.2,107.8 119.5,113.0 C129.8,118.2 138.1,121.8 151.5,127.0 C164.9,132.2 181.9,138.0 200.0,144.0 C218.1,150.0 237.4,156.2 260.0,163.0 C282.6,169.8 318.8,180.2 335.5,185.0 C352.2,189.8 355.9,190.8 360.0,192.0 L360.0,195.0 C355.9,194.0 352.2,193.1 335.5,188.8 C318.8,184.5 282.6,175.3 260.0,169.1 C237.4,163.0 218.1,157.7 200.0,152.0 C181.9,146.3 164.9,140.2 151.5,135.0 C138.1,129.8 129.8,126.2 119.5,121.0 C109.2,115.8 101.3,111.3 90.0,104.0 C78.7,96.7 64.8,86.0 51.5,77.0 C38.2,68.0 23.1,59.2 10.0,50.0 C-3.1,40.8 -20.8,26.7 -27.0,22.0 Z" fill="#716a59"/>
<path d="M10.0,42.0 C16.9,46.5 38.2,60.0 51.5,69.0 C64.8,78.0 78.7,88.7 90.0,96.0 C101.3,103.3 109.2,107.8 119.5,113.0 C129.8,118.2 138.1,121.8 151.5,127.0 C164.9,132.2 181.9,138.0 200.0,144.0 C218.1,150.0 237.4,156.2 260.0,163.0 C282.6,169.8 318.8,180.2 335.5,185.0 C352.2,189.8 355.9,190.8 360.0,192.0 L360.0,190.5 C355.9,189.3 352.2,188.0 335.5,183.1 C318.8,178.1 282.6,167.6 260.0,160.6 C237.4,153.6 218.1,147.3 200.0,141.2 C181.9,135.0 164.9,129.1 151.5,123.8 C138.1,118.4 129.8,114.6 119.5,109.3 C109.2,104.0 101.3,99.4 90.0,91.9 C78.7,84.4 64.8,73.6 51.5,64.4 C38.2,55.3 16.9,41.6 10.0,37.0 Z" fill="#22461f"/>
<path d="M10.0,37.0 C16.9,41.6 38.2,55.3 51.5,64.4 C64.8,73.6 78.7,84.4 90.0,91.9 C101.3,99.4 109.2,104.0 119.5,109.3 C129.8,114.6 138.1,118.4 151.5,123.8 C164.9,129.1 181.9,135.0 200.0,141.2 C218.1,147.3 237.4,153.6 260.0,160.6 C282.6,167.6 318.8,178.1 335.5,183.1 C352.2,188.0 355.9,189.3 360.0,190.5 L360.0,188.0 C355.9,186.7 352.2,185.2 335.5,180.0 C318.8,174.8 282.6,164.2 260.0,157.0 C237.4,149.8 218.1,143.3 200.0,137.0 C181.9,130.7 164.9,124.5 151.5,119.0 C138.1,113.5 129.8,109.5 119.5,104.0 C109.2,98.5 101.3,93.7 90.0,86.0 C78.7,78.3 64.8,67.3 51.5,58.0 C38.2,48.7 16.9,34.7 10.0,30.0 Z" fill="#6d6655"/>
<path d="M10.0,30.0 C16.9,34.7 38.2,48.7 51.5,58.0 C64.8,67.3 78.7,78.3 90.0,86.0 C101.3,93.7 109.2,98.5 119.5,104.0 C129.8,109.5 138.1,113.5 151.5,119.0 C164.9,124.5 181.9,130.7 200.0,137.0 C218.1,143.3 237.4,149.8 260.0,157.0 C282.6,164.2 318.8,174.8 335.5,180.0 C352.2,185.2 355.9,186.7 360.0,188.0 L360.0,186.5 C355.9,185.1 352.2,183.5 335.5,178.2 C318.8,173.0 282.6,162.2 260.0,155.0 C237.4,147.8 218.1,141.2 200.0,134.8 C181.9,128.3 164.9,122.1 151.5,116.5 C138.1,110.9 129.8,106.8 119.5,101.2 C109.2,95.7 101.3,90.8 90.0,83.0 C78.7,75.2 64.8,64.2 51.5,54.8 C38.2,45.3 16.9,31.2 10.0,26.5 Z" fill="#28491f"/>
<path d="M10.0,26.5 C16.9,31.2 38.2,45.3 51.5,54.8 C64.8,64.2 78.7,75.2 90.0,83.0 C101.3,90.8 109.2,95.7 119.5,101.2 C129.8,106.8 138.1,110.9 151.5,116.5 C164.9,122.1 181.9,128.3 200.0,134.8 C218.1,141.2 237.4,147.8 260.0,155.0 C282.6,162.2 318.8,173.0 335.5,178.2 C352.2,183.5 355.9,185.1 360.0,186.5 L360.0,184.0 C355.9,182.5 352.2,180.7 335.5,175.2 C318.8,169.8 282.6,158.9 260.0,151.5 C237.4,144.1 218.1,137.3 200.0,130.8 C181.9,124.2 164.9,117.8 151.5,112.0 C138.1,106.2 129.8,102.0 119.5,96.2 C109.2,90.5 101.3,85.4 90.0,77.5 C78.7,69.6 64.8,58.3 51.5,48.8 C38.2,39.2 16.9,24.8 10.0,20.0 Z" fill="#5f5949"/>
<path d="M10.0,20.0 C16.9,24.8 38.2,39.2 51.5,48.8 C64.8,58.3 78.7,69.6 90.0,77.5 C101.3,85.4 109.2,90.5 119.5,96.2 C129.8,102.0 138.1,106.2 151.5,112.0 C164.9,117.8 181.9,124.2 200.0,130.8 C218.1,137.3 237.4,144.1 260.0,151.5 C282.6,158.9 318.8,169.8 335.5,175.2 C352.2,180.7 355.9,182.5 360.0,184.0 L360.0,182.5 C355.9,181.0 352.2,179.0 335.5,173.6 C318.8,168.1 282.6,157.1 260.0,149.6 C237.4,142.1 218.1,135.3 200.0,128.7 C181.9,122.0 164.9,115.6 151.5,109.8 C138.1,103.9 129.8,99.6 119.5,93.8 C109.2,88.0 101.3,82.9 90.0,74.9 C78.7,66.9 64.8,55.6 51.5,45.9 C38.2,36.3 16.9,21.8 10.0,17.0 Z" fill="#2c4c25"/>
<path d="M40,40 C62,58 84,78 104,92 M34,46 C54,64 74,82 96,98" stroke="#2e4e27" stroke-width="1.6" fill="none" stroke-dasharray="7 2 3 2"/>
<path d="M30,-4 L342,144 L332,158 Q247,144 184,107 C176,88 150,76 122,86 L20,8 Z" fill="#21461f"/>
<path d="M48,19.500 L164,71.500 L197.500,87 L341.500,144.500 L341.500,147.500 L197.500,95 L164,79 L48,27 Z" fill="#6a6352"/>
<path d="M50,29 L164,80.500 L197.500,96.500 L320,141" stroke="#6a6352" stroke-width="3.400" stroke-dasharray="2.600 3.200" fill="none"/>
<path d="M62,40 L120,78 L150,74 L84,44 Z" fill="#2a4c24"/>
<path d="M200,104 L300,146 L330,155 Q260,140 205,112 Z" fill="#2a4c24"/>
<path d="M20,12 C58,41 92,70 122,90" stroke="#17341a" stroke-width="3" fill="none"/>
<path d="M186,113 Q247,150 326,163" stroke="#21451f" stroke-width="7" fill="none"/>
<rect x="46" y="16" width="6" height="11" fill="#7a7361"/>
<rect x="188" y="82" width="5" height="14" fill="#6a6352"/>
<rect x="98" y="100" width="8" height="14" fill="#6e6756"/>
<path d="M-28.5,0 L-28.5,24 C-20,33 10,37 28,28 L28.5,0 Z" fill="url(#cyl)"/>
<path d="M-28.5,23 L-10,37 L14,53 L0,60 L-28.5,37 Z" fill="#20451f"/>
<path d="M-22,20 L-22,40 L20,60 L40,60 L40,40 Z" fill="#20451f" opacity="0"/>
<path d="M322,164 L322,203 C335,213 372,212 383,198 L383,164 Z" fill="url(#cyl)"/>
<path d="M110,97 L110,112 C125,124 170,124 186,112 L186,97 Z" fill="#5f5949"/>
<rect x="118" y="118" width="9" height="22" fill="#6e6756"/>
<path d="M14,-11.5 L364,151.5" stroke="#79dc86" stroke-width="5.900" fill="none" stroke-linecap="butt"/>
<path d="M20,8 C58,37 92,66 122,86" stroke="#79dc86" stroke-width="5.900" fill="none" stroke-linecap="butt"/>
<path d="M184,107 Q247,144 330,157" stroke="#79dc86" stroke-width="5.900" fill="none" stroke-linecap="butt"/>
<path d="M14,-11.5 L364,151.5" stroke="#4ee961" stroke-width="4.200" fill="none" stroke-linecap="butt"/>
<path d="M20,8 C58,37 92,66 122,86" stroke="#4ee961" stroke-width="4.200" fill="none" stroke-linecap="butt"/>
<path d="M184,107 Q247,144 330,157" stroke="#4ee961" stroke-width="4.200" fill="none" stroke-linecap="butt"/>
<ellipse cx="-0.5" cy="-0.7" rx="28.2" ry="15.4" fill="#79dc86"/>
<ellipse cx="-0.5" cy="-0.7" rx="27.2" ry="14.6" fill="#4ee961"/>
<path d="M-24.7,2.3 a27.2,14.6 0 0 1 6,-9 l3,2 a27.2,14.6 0 0 0 -4,8 z" fill="#8d92f2"/>
<ellipse cx="0.5" cy="-0.2" rx="20.3" ry="8.8" fill="url(#hole)"/>
<ellipse cx="0.5" cy="-0.2" rx="20.3" ry="8.8" fill="none" stroke="#3e3a30" stroke-width="0.8" opacity="0.6"/>
<ellipse cx="353" cy="164" rx="32" ry="17.3" fill="#79dc86"/>
<ellipse cx="353" cy="164" rx="31" ry="16.5" fill="#4ee961"/>
<path d="M372,155 a31,16.5 0 0 1 9,13 l-4,-1 a31,16.5 0 0 0 -7,-10 z" fill="#8d92f2"/>
<path d="M327,164 a31,16.5 0 0 0 5,9 l2,-3 a31,16.5 0 0 1 -3,-7 z" fill="#8d92f2"/>
<ellipse cx="354" cy="164.5" rx="21" ry="9" fill="url(#hole)"/>
<ellipse cx="354" cy="164.5" rx="21" ry="9" fill="none" stroke="#3e3a30" stroke-width="0.8" opacity="0.6"/>
<ellipse cx="148.5" cy="97" rx="40" ry="21" fill="#79dc86"/>
<ellipse cx="148.5" cy="97" rx="39" ry="20" fill="#4ee961"/>
<ellipse cx="148.5" cy="97" rx="33" ry="16" fill="#8d92f2"/>
<path d="M148.5,97 L115.5,98 A33,16 0 0 1 156.5,81.4 Z" fill="#4ee961"/>
<path d="M148.5,97 L179.5,102.5 A33,16 0 0 1 152.5,113 Z" fill="#4ee961"/>
<path d="M148.5,97 L128.5,109.8 A33,16 0 0 1 116.5,101 Z" fill="#4ee961"/>
<ellipse cx="148.5" cy="97" rx="21" ry="10" fill="#4ee961"/>
<path d="M121.5,98 a27,13 0 0 1 20,-10" fill="none" stroke="#8d92f2" stroke-width="2"/>
<path d="M175.5,97 a27,13 0 0 1 -16,11" fill="none" stroke="#4ee961" stroke-width="2"/>
<path d="M131.5,99 a18,8 0 0 0 14,7" fill="none" stroke="#8d92f2" stroke-width="2.2"/>
<ellipse cx="148.5" cy="96.5" rx="15.5" ry="6" fill="url(#hole)"/>
</g>
<g transform="translate(940,482) scale(1.012)">
<path d="M-28.5,0 L-28.5,37 C-25.2,39.8 -16.6,46.8 -8.5,54.0 C-0.4,61.2 10.0,71.5 20.0,80.0 C30.0,88.5 39.6,96.5 51.5,105.0 C63.4,113.5 74.8,122.5 91.5,131.0 C108.2,139.5 133.4,149.0 151.5,156.0 C169.6,163.0 185.0,167.8 200.0,173.0 C215.0,178.2 226.2,182.5 241.5,187.0 C256.8,191.5 275.8,196.7 291.5,200.0 C307.2,203.3 323.2,205.5 335.5,207.0 C347.8,208.5 357.9,209.3 365.0,209.0 C372.1,208.7 375.0,207.0 378.0,205.0 C381.0,203.0 382.2,198.3 383.0,197.0 L383,164 L366,150 L18,-15 Z" fill="#20451f"/>
<path d="M-28.5,37 C-25.2,39.8 -16.6,46.8 -8.5,54.0 C-0.4,61.2 10.0,71.5 20.0,80.0 C30.0,88.5 39.6,96.5 51.5,105.0 C63.4,113.5 74.8,122.5 91.5,131.0 C108.2,139.5 133.4,149.0 151.5,156.0 C169.6,163.0 185.0,167.8 200.0,173.0 C215.0,178.2 226.2,182.5 241.5,187.0 C256.8,191.5 275.8,196.7 291.5,200.0 C307.2,203.3 323.2,205.5 335.5,207.0 C347.8,208.5 360.1,208.7 365.0,209.0" fill="none" stroke="#20451f" stroke-width="2.2" stroke-dasharray="1.5 3.5 2.5 2 1 4" transform="translate(-1,2.2)"/>
<path d="M-27,0 L-27,14 C-20.8,18.7 -3.1,32.8 10.0,42.0 C23.1,51.2 38.2,60.0 51.5,69.0 C64.8,78.0 78.7,88.7 90.0,96.0 C101.3,103.3 109.2,107.8 119.5,113.0 C129.8,118.2 138.1,121.8 151.5,127.0 C164.9,132.2 181.9,138.0 200.0,144.0 C218.1,150.0 237.4,156.2 260.0,163.0 C282.6,169.8 318.8,180.2 335.5,185.0 C352.2,189.8 355.9,190.8 360.0,192.0 L383,164 L366,150 L18,-15 Z" fill="#655e4d"/>
<path d="M-27.0,14.0 C-20.8,18.7 -3.1,32.8 10.0,42.0 C23.1,51.2 38.2,60.0 51.5,69.0 C64.8,78.0 78.7,88.7 90.0,96.0 C101.3,103.3 109.2,107.8 119.5,113.0 C129.8,118.2 138.1,121.8 151.5,127.0 C164.9,132.2 181.9,138.0 200.0,144.0 C218.1,150.0 237.4,156.2 260.0,163.0 C282.6,169.8 318.8,180.2 335.5,185.0 C352.2,189.8 355.9,190.8 360.0,192.0 L360.0,195.0 C355.9,194.0 352.2,193.1 335.5,188.8 C318.8,184.5 282.6,175.3 260.0,169.1 C237.4,163.0 218.1,157.7 200.0,152.0 C181.9,146.3 164.9,140.2 151.5,135.0 C138.1,129.8 129.8,126.2 119.5,121.0 C109.2,115.8 101.3,111.3 90.0,104.0 C78.7,96.7 64.8,86.0 51.5,77.0 C38.2,68.0 23.1,59.2 10.0,50.0 C-3.1,40.8 -20.8,26.7 -27.0,22.0 Z" fill="#716a59"/>
<path d="M10.0,42.0 C16.9,46.5 38.2,60.0 51.5,69.0 C64.8,78.0 78.7,88.7 90.0,96.0 C101.3,103.3 109.2,107.8 119.5,113.0 C129.8,118.2 138.1,121.8 151.5,127.0 C164.9,132.2 181.9,138.0 200.0,144.0 C218.1,150.0 237.4,156.2 260.0,163.0 C282.6,169.8 318.8,180.2 335.5,185.0 C352.2,189.8 355.9,190.8 360.0,192.0 L360.0,190.5 C355.9,189.3 352.2,188.0 335.5,183.1 C318.8,178.1 282.6,167.6 260.0,160.6 C237.4,153.6 218.1,147.3 200.0,141.2 C181.9,135.0 164.9,129.1 151.5,123.8 C138.1,118.4 129.8,114.6 119.5,109.3 C109.2,104.0 101.3,99.4 90.0,91.9 C78.7,84.4 64.8,73.6 51.5,64.4 C38.2,55.3 16.9,41.6 10.0,37.0 Z" fill="#22461f"/>
<path d="M10.0,37.0 C16.9,41.6 38.2,55.3 51.5,64.4 C64.8,73.6 78.7,84.4 90.0,91.9 C101.3,99.4 109.2,104.0 119.5,109.3 C129.8,114.6 138.1,118.4 151.5,123.8 C164.9,129.1 181.9,135.0 200.0,141.2 C218.1,147.3 237.4,153.6 260.0,160.6 C282.6,167.6 318.8,178.1 335.5,183.1 C352.2,188.0 355.9,189.3 360.0,190.5 L360.0,188.0 C355.9,186.7 352.2,185.2 335.5,180.0 C318.8,174.8 282.6,164.2 260.0,157.0 C237.4,149.8 218.1,143.3 200.0,137.0 C181.9,130.7 164.9,124.5 151.5,119.0 C138.1,113.5 129.8,109.5 119.5,104.0 C109.2,98.5 101.3,93.7 90.0,86.0 C78.7,78.3 64.8,67.3 51.5,58.0 C38.2,48.7 16.9,34.7 10.0,30.0 Z" fill="#6d6655"/>
<path d="M10.0,30.0 C16.9,34.7 38.2,48.7 51.5,58.0 C64.8,67.3 78.7,78.3 90.0,86.0 C101.3,93.7 109.2,98.5 119.5,104.0 C129.8,109.5 138.1,113.5 151.5,119.0 C164.9,124.5 181.9,130.7 200.0,137.0 C218.1,143.3 237.4,149.8 260.0,157.0 C282.6,164.2 318.8,174.8 335.5,180.0 C352.2,185.2 355.9,186.7 360.0,188.0 L360.0,186.5 C355.9,185.1 352.2,183.5 335.5,178.2 C318.8,173.0 282.6,162.2 260.0,155.0 C237.4,147.8 218.1,141.2 200.0,134.8 C181.9,128.3 164.9,122.1 151.5,116.5 C138.1,110.9 129.8,106.8 119.5,101.2 C109.2,95.7 101.3,90.8 90.0,83.0 C78.7,75.2 64.8,64.2 51.5,54.8 C38.2,45.3 16.9,31.2 10.0,26.5 Z" fill="#28491f"/>
<path d="M10.0,26.5 C16.9,31.2 38.2,45.3 51.5,54.8 C64.8,64.2 78.7,75.2 90.0,83.0 C101.3,90.8 109.2,95.7 119.5,101.2 C129.8,106.8 138.1,110.9 151.5,116.5 C164.9,122.1 181.9,128.3 200.0,134.8 C218.1,141.2 237.4,147.8 260.0,155.0 C282.6,162.2 318.8,173.0 335.5,178.2 C352.2,183.5 355.9,185.1 360.0,186.5 L360.0,184.0 C355.9,182.5 352.2,180.7 335.5,175.2 C318.8,169.8 282.6,158.9 260.0,151.5 C237.4,144.1 218.1,137.3 200.0,130.8 C181.9,124.2 164.9,117.8 151.5,112.0 C138.1,106.2 129.8,102.0 119.5,96.2 C109.2,90.5 101.3,85.4 90.0,77.5 C78.7,69.6 64.8,58.3 51.5,48.8 C38.2,39.2 16.9,24.8 10.0,20.0 Z" fill="#5f5949"/>
<path d="M10.0,20.0 C16.9,24.8 38.2,39.2 51.5,48.8 C64.8,58.3 78.7,69.6 90.0,77.5 C101.3,85.4 109.2,90.5 119.5,96.2 C129.8,102.0 138.1,106.2 151.5,112.0 C164.9,117.8 181.9,124.2 200.0,130.8 C218.1,137.3 237.4,144.1 260.0,151.5 C282.6,158.9 318.8,169.8 335.5,175.2 C352.2,180.7 355.9,182.5 360.0,184.0 L360.0,182.5 C355.9,181.0 352.2,179.0 335.5,173.6 C318.8,168.1 282.6,157.1 260.0,149.6 C237.4,142.1 218.1,135.3 200.0,128.7 C181.9,122.0 164.9,115.6 151.5,109.8 C138.1,103.9 129.8,99.6 119.5,93.8 C109.2,88.0 101.3,82.9 90.0,74.9 C78.7,66.9 64.8,55.6 51.5,45.9 C38.2,36.3 16.9,21.8 10.0,17.0 Z" fill="#2c4c25"/>
<path d="M40,40 C62,58 84,78 104,92 M34,46 C54,64 74,82 96,98" stroke="#2e4e27" stroke-width="1.6" fill="none" stroke-dasharray="7 2 3 2"/>
<path d="M30,-4 L342,144 L332,158 Q247,144 184,107 C176,88 150,76 122,86 L20,8 Z" fill="#21461f"/>
<path d="M48,19.500 L164,71.500 L197.500,87 L341.500,144.500 L341.500,147.500 L197.500,95 L164,79 L48,27 Z" fill="#6a6352"/>
<path d="M50,29 L164,80.500 L197.500,96.500 L320,141" stroke="#6a6352" stroke-width="3.400" stroke-dasharray="2.600 3.200" fill="none"/>
<path d="M62,40 L120,78 L150,74 L84,44 Z" fill="#2a4c24"/>
<path d="M200,104 L300,146 L330,155 Q260,140 205,112 Z" fill="#2a4c24"/>
<path d="M20,12 C58,41 92,70 122,90" stroke="#17341a" stroke-width="3" fill="none"/>
<path d="M186,113 Q247,150 326,163" stroke="#21451f" stroke-width="7" fill="none"/>
<rect x="46" y="16" width="6" height="11" fill="#7a7361"/>
<rect x="188" y="82" width="5" height="14" fill="#6a6352"/>
<rect x="98" y="100" width="8" height="14" fill="#6e6756"/>
<path d="M-28.5,0 L-28.5,24 C-20,33 10,37 28,28 L28.5,0 Z" fill="url(#cyl)"/>
<path d="M-28.5,23 L-10,37 L14,53 L0,60 L-28.5,37 Z" fill="#20451f"/>
<path d="M-22,20 L-22,40 L20,60 L40,60 L40,40 Z" fill="#20451f" opacity="0"/>
<path d="M322,164 L322,203 C335,213 372,212 383,198 L383,164 Z" fill="url(#cyl)"/>
<path d="M110,97 L110,112 C125,124 170,124 186,112 L186,97 Z" fill="#5f5949"/>
<rect x="118" y="118" width="9" height="22" fill="#6e6756"/>
<path d="M14,-11.5 L364,151.5" stroke="#79dc86" stroke-width="5.900" fill="none" stroke-linecap="butt"/>
<path d="M20,8 C58,37 92,66 122,86" stroke="#79dc86" stroke-width="5.900" fill="none" stroke-linecap="butt"/>
<path d="M184,107 Q247,144 330,157" stroke="#79dc86" stroke-width="5.900" fill="none" stroke-linecap="butt"/>
<path d="M14,-11.5 L364,151.5" stroke="#4ee961" stroke-width="4.200" fill="none" stroke-linecap="butt"/>
<path d="M20,8 C58,37 92,66 122,86" stroke="#4ee961" stroke-width="4.200" fill="none" stroke-linecap="butt"/>
<path d="M184,107 Q247,144 330,157" stroke="#4ee961" stroke-width="4.200" fill="none" stroke-linecap="butt"/>
<ellipse cx="-0.5" cy="-0.7" rx="28.2" ry="15.4" fill="#79dc86"/>
<ellipse cx="-0.5" cy="-0.7" rx="27.2" ry="14.6" fill="#4ee961"/>
<path d="M-24.7,2.3 a27.2,14.6 0 0 1 6,-9 l3,2 a27.2,14.6 0 0 0 -4,8 z" fill="#8d92f2"/>
<ellipse cx="0.5" cy="-0.2" rx="20.3" ry="8.8" fill="url(#hole)"/>
<ellipse cx="0.5" cy="-0.2" rx="20.3" ry="8.8" fill="none" stroke="#3e3a30" stroke-width="0.8" opacity="0.6"/>
<ellipse cx="353" cy="164" rx="32" ry="17.3" fill="#79dc86"/>
<ellipse cx="353" cy="164" rx="31" ry="16.5" fill="#4ee961"/>
<path d="M372,155 a31,16.5 0 0 1 9,13 l-4,-1 a31,16.5 0 0 0 -7,-10 z" fill="#8d92f2"/>
<path d="M327,164 a31,16.5 0 0 0 5,9 l2,-3 a31,16.5 0 0 1 -3,-7 z" fill="#8d92f2"/>
<ellipse cx="354" cy="164.5" rx="21" ry="9" fill="url(#hole)"/>
<ellipse cx="354" cy="164.5" rx="21" ry="9" fill="none" stroke="#3e3a30" stroke-width="0.8" opacity="0.6"/>
<ellipse cx="148.5" cy="97" rx="40" ry="21" fill="#79dc86"/>
<ellipse cx="148.5" cy="97" rx="39" ry="20" fill="#4ee961"/>
<ellipse cx="148.5" cy="97" rx="33" ry="16" fill="#8d92f2"/>
<path d="M148.5,97 L115.5,98 A33,16 0 0 1 156.5,81.4 Z" fill="#4ee961"/>
<path d="M148.5,97 L179.5,102.5 A33,16 0 0 1 152.5,113 Z" fill="#4ee961"/>
<path d="M148.5,97 L128.5,109.8 A33,16 0 0 1 116.5,101 Z" fill="#4ee961"/>
<ellipse cx="148.5" cy="97" rx="21" ry="10" fill="#4ee961"/>
<path d="M121.5,98 a27,13 0 0 1 20,-10" fill="none" stroke="#8d92f2" stroke-width="2"/>
<path d="M175.5,97 a27,13 0 0 1 -16,11" fill="none" stroke="#4ee961" stroke-width="2"/>
<path d="M131.5,99 a18,8 0 0 0 14,7" fill="none" stroke="#8d92f2" stroke-width="2.2"/>
<ellipse cx="148.5" cy="96.5" rx="15.5" ry="6" fill="url(#hole)"/>
</g>
<path d="M1151.5,418 L1151.5,853" stroke="#b6b6a2" stroke-width="2.600" fill="none" opacity="0.700"/>
</svg>
<!--CUBE-->
<svg width="1600" height="900" viewBox="0 0 1600 900" style="position:absolute;left:-1px;top:-180px" font-family="Liberation Sans, Arial, sans-serif">
<rect x="6.500" y="186.500" width="434" height="30" fill="#f2f2f2" stroke="#c6c6c6" stroke-width="1"/>
<path d="M12.500,202 l5.500,-3.800 v7.600 z M18.500,202 l5.500,-3.800 v7.600 z" fill="#333"/>
<text x="37.4" y="206.0" font-size="13" font-weight="normal" fill="#6a6a6a" textLength="64.6" lengthAdjust="spacingAndGlyphs" >BROWSER</text>
<circle cx="420" cy="201.500" r="5.300" fill="#222"/><rect x="416.800" y="200.600" width="6.400" height="1.800" fill="#f2f2f2"/>
<path d="M435.500,195.500 V208 M437.800,195.500 V208" stroke="#999" stroke-width="1" fill="none"/>
<defs><linearGradient id="trig" x1="0" y1="1" x2="1" y2="0"><stop offset="0" stop-color="#2b2b2b"/><stop offset="0.500" stop-color="#9a9a9a"/><stop offset="1" stop-color="#d8d8d8"/></linearGradient></defs>
<rect x="51.0" y="223.6" width="118.6" height="24.4" fill="#efefef"/>
<path d="M27.5,243.0 L41.0,243.0 L41.0,229.5 Z" fill="url(#trig)" stroke="#2a2a2a" stroke-width="1"/>
<path d="M55.0,236.4 q10,-9.500 20,0 q-10,9.500 -20,0 z" fill="#9f9f9f"/>
<circle cx="65.0" cy="236.4" r="4" fill="#ececec"/><circle cx="65.0" cy="236.4" r="2.300" fill="#9f9f9f"/>
<g stroke="#4a4a4a" stroke-width="1.100" stroke-linejoin="round">
<path d="M86.5,243.4 v-13.500 l4,-3 h5.500 v7 l-1.500,1.500 h6.500 l3.500,-2 v8 l-3.500,3 h-13.500 q-1,0 -1,-1 z" fill="#ededed"/>
<path d="M94.5,235.9 h6 l3.500,-2.800 M100.5,235.9 v7.800 M94.5,243.9 v-7 M94.5,235.9 h-8" fill="none" stroke="#9a9a9a" stroke-width="0.900"/>
</g>
<text x="124.0" y="240.6" font-size="12.5" font-weight="normal" fill="#444" textLength="35.0" lengthAdjust="spacingAndGlyphs" >CD v1</text>
<rect x="73.6" y="253.6" width="112.0" height="24.4" fill="#efefef"/>
<path d="M78.500,273 V256.500 H89.500 L94.500,261.500 V273 Z" fill="#f7f7f7" stroke="#555" stroke-width="1.100"/><path d="M89.500,256.500 V261.500 H94.500" fill="none" stroke="#555" stroke-width="1"/>
<rect x="77.600" y="271.300" width="18" height="4.300" rx="1" fill="#f2b01e" stroke="#b87a00" stroke-width="0.800"/>
<text x="115.0" y="270.6" font-size="12.5" font-weight="normal" fill="#444" textLength="57.4" lengthAdjust="spacingAndGlyphs" >Units: mm</text>
<rect x="73.6" y="283.6" width="137.4" height="24.4" fill="#efefef"/>
<path d="M51.5,288.5 L62.5,296.0 L51.5,303.5 Z" fill="#fafafa" stroke="#2f2f2f" stroke-width="1.300" stroke-linejoin="round"/>
<path d="M77.200,304 V288 H85 L86.500,290.500 H97.400 V304 Z" fill="#9b9b9b"/><rect x="77.200" y="290.200" width="8" height="0.900" fill="#efefef"/>
<text x="115.0" y="300.6" font-size="12.5" font-weight="normal" fill="#444" textLength="84.4" lengthAdjust="spacingAndGlyphs" >Named Views</text>
<rect x="73.6" y="313.6" width="128.4" height="24.4" fill="#efefef"/>
<path d="M51.5,318.5 L62.5,326.0 L51.5,333.5 Z" fill="#fafafa" stroke="#2f2f2f" stroke-width="1.300" stroke-linejoin="round"/>
<path d="M77.4,326.4 q10,-9.500 20,0 q-10,9.500 -20,0 z" fill="#9f9f9f"/>
<circle cx="87.4" cy="326.4" r="4" fill="#ececec"/><circle cx="87.4" cy="326.4" r="2.300" fill="#9f9f9f"/>
<g stroke="#4a4a4a" stroke-width="1.100" stroke-linejoin="round">
<path d="M108.5,333.4 v-13.500 l4,-3 h5.500 v7 l-1.500,1.500 h6.500 l3.500,-2 v8 l-3.500,3 h-13.500 q-1,0 -1,-1 z" fill="#ededed"/>
<path d="M116.5,325.9 h6 l3.500,-2.800 M122.5,325.9 v7.800 M116.5,333.9 v-7 M116.5,325.9 h-8" fill="none" stroke="#9a9a9a" stroke-width="0.900"/>
</g>
<text x="146.4" y="330.6" font-size="12.5" font-weight="normal" fill="#444" textLength="41.6" lengthAdjust="spacingAndGlyphs" >Models</text>
<rect x="73.6" y="343.6" width="96.8" height="24.4" fill="#efefef"/>
<path d="M50.0,362.5 L63.6,362.5 L63.6,350.0 Z" fill="url(#trig)" stroke="#2a2a2a" stroke-width="1"/>
<g fill="none" stroke="#5a5a5a" stroke-width="1.100" stroke-linejoin="round">
<path d="M77.5,364.0 v-15.500 h6.500 l1.500,2 h4"/>
<path d="M83.0,354.5 l3.500,-3.500 l4.500,3.500 v2.500" stroke="#4a88c8" fill="#d6e8f8"/>
<path d="M77.5,364.0 l4.500,-8.500 h14 l-4.500,8.500 z" fill="#f6f6f6"/>
</g>
<text x="115.0" y="360.8" font-size="12.5" font-weight="normal" fill="#444" textLength="42.0" lengthAdjust="spacingAndGlyphs" >Setups</text>
<rect x="96.3" y="373.3" width="288.0" height="24.7" fill="#efefef"/>
<path d="M72.0,393.0 L86.0,393.0 L86.0,379.5 Z" fill="url(#trig)" stroke="#2a2a2a" stroke-width="1"/>
<g fill="none" stroke="#5a5a5a" stroke-width="1.100" stroke-linejoin="round">
<path d="M100.1,394.0 v-15.500 h6.500 l1.500,2 h4"/>
<path d="M105.6,384.5 l3.500,-3.500 l4.500,3.500 v2.500" stroke="#4a88c8" fill="#d6e8f8"/>
<path d="M100.1,394.0 l4.500,-8.500 h14 l-4.500,8.500 z" fill="#f6f6f6"/>
</g>
<rect x="127.3" y="373.3" width="225.5" height="24.7" fill="#a9cdfc"/>
<text x="137.9" y="390.6" font-size="13" font-weight="bold" fill="#1b3d7c" textLength="202.5" lengthAdjust="spacingAndGlyphs" >Bigrep Studio G2 [Completed]</text>
<circle cx="366.300" cy="386" r="7.300" fill="#fbfbfb" stroke="#333" stroke-width="1.300"/><circle cx="366.300" cy="386" r="3" fill="#222"/>
<rect x="118.8" y="403.7" width="222.1" height="24.5" fill="#efefef"/>
<g fill="none" stroke="#2b8fd4" stroke-width="1.100"><rect x="127.500" y="406.200" width="9.500" height="3.200" rx="1" fill="#eaf4fc"/><path d="M128.300,409.400 L131.400,417 H133.100 L136.200,409.400" fill="#eaf4fc"/><path d="M129.300,411.800 H135.200 M130.300,414 H134.200"/></g>
<path d="M124.400,425.500 L132.200,418 L137,425.500 Z" fill="#3a8fd0"/>
<circle cx="139.500" cy="421.500" r="3.600" fill="#4a4a4a"/><circle cx="139.500" cy="421.500" r="4.600" fill="none" stroke="#4a4a4a" stroke-width="1.600" stroke-dasharray="1.600 2"/><circle cx="139.500" cy="421.500" r="1.400" fill="#efefef"/>
<text x="160.0" y="420.6" font-size="12.5" font-weight="normal" fill="#444" textLength="164.6" lengthAdjust="spacingAndGlyphs" >PLA 2.85mm, 0.4mm Nozzle</text>
<rect x="118.8" y="433.4" width="101.9" height="24.3" fill="#efefef"/>
<path d="M122.6,445.8 q10,-9.500 20,0 q-10,9.500 -20,0 z" fill="#9f9f9f"/>
<circle cx="132.6" cy="445.8" r="4" fill="#ececec"/><circle cx="132.6" cy="445.8" r="2.300" fill="#9f9f9f"/>
<text x="160.0" y="450.3" font-size="12.5" font-weight="normal" fill="#444" textLength="48.8" lengthAdjust="spacingAndGlyphs" >Platform</text>
<rect x="118.8" y="463.3" width="157.1" height="24.5" fill="#efefef"/>
<path d="M123.800,469.300 H138 a2.450,2.450 0 0 1 0,4.900 H127 a2.450,2.450 0 0 0 0,4.900 H138 a2.450,2.450 0 0 1 0,4.900 H123.800" fill="none" stroke="#1f96dc" stroke-width="1.700"/>
<text x="160.0" y="480.6" font-size="12.5" font-weight="normal" fill="#444" textLength="101.6" lengthAdjust="spacingAndGlyphs" >Additive Toolpath</text>
<defs><radialGradient id="cubesh" cx="0.500" cy="0.500" r="0.500"><stop offset="0" stop-color="#bdbdbd" stop-opacity="0.600"/><stop offset="1" stop-color="#ffffff" stop-opacity="0"/></radialGradient><linearGradient id="cubeL" x1="0" y1="0" x2="1" y2="1"><stop offset="0" stop-color="#ececec"/><stop offset="1" stop-color="#dcdcdc"/></linearGradient></defs>
<ellipse cx="1532" cy="282" rx="40" ry="14" fill="url(#cubesh)"/>
<path d="M1500.500,224 L1532.500,211.500 L1569,224 L1535.500,240 Z" fill="#f1f1f1"/>
<path d="M1500.500,224 L1535.500,240 L1535.500,284 L1503,263 Z" fill="url(#cubeL)"/>
<path d="M1535.500,240 L1569,224 L1567,264 L1535.500,284 Z" fill="#e6e6e6"/>
<g fill="none" stroke="#8c8c8c" stroke-width="1.100" stroke-dasharray="4 2.500"><path d="M1500.500,224 L1532.500,211.500 L1569,224 L1535.500,240 Z M1535.500,240 V284 M1500.500,224 L1503,263 L1535.500,284 L1567,264 L1569,224"/></g>
<text transform="matrix(0.900,0.400,0,1,1506.500,253.800)" font-size="10.500" font-weight="bold" fill="#8f8f8f" textLength="27" lengthAdjust="spacingAndGlyphs">FRONT</text>
<text transform="matrix(0.850,-0.460,0,1,1543,263.800)" font-size="10.500" font-weight="bold" fill="#8f8f8f" textLength="24" lengthAdjust="spacingAndGlyphs">RIGHT</text>
<text transform="matrix(0.900,0.330,-0.800,0.450,1529,220)" font-size="7" font-weight="bold" fill="#b4b4b4">TOP</text>
<path d="M1571.300,217 L1568.300,264" stroke="#6a6af8" stroke-width="2.400" stroke-dasharray="11 1.500"/>
<path d="M1567.500,264.500 L1531,290" stroke="#55e070" stroke-width="2.200"/>
<circle cx="1568" cy="264" r="1.300" fill="#e05050"/>
<text x="1567.800" y="213.500" font-size="14.500" fill="#7272f8">Z</text>
<text x="1521.300" y="298.800" font-size="14" fill="#6be27c">Y</text>
<rect x="1282" y="305.500" width="311.500" height="450" fill="#f2f2f2" stroke="#cfcfcf" stroke-width="1"/>
<path d="M1282,336 H1593.500" stroke="#d6d6d6" stroke-width="1"/>
<path d="M1283.500,316 V326.500 M1286,316 V326.500" stroke="#8a8a8a" stroke-width="1" fill="none"/>
<circle cx="1301.700" cy="320.700" r="5.800" fill="#222"/><rect x="1298.200" y="319.800" width="7" height="1.900" fill="#f2f2f2"/>
<text x="1312.9" y="325.1" font-size="13" font-weight="normal" fill="#5c5c5c" textLength="190.3" lengthAdjust="spacingAndGlyphs" >SIMULATE ADDITIVE TOOLPATH</text>
<path d="M1575.500,316.700 l6,4 l-6,4 z M1581.500,316.700 l6,4 l-6,4 z" fill="#222"/>
<path d="M1282.500,371 V339.500 H1371.600 V370.500 H1593.500" fill="none" stroke="#c9c9c9" stroke-width="1"/>
<g stroke="#3a3a3a" stroke-width="1.100" fill="#f8f8f8"><path d="M1293.700,352.500 q0,-5 6.300,-5 q6.300,0 6.300,5 q0,3 -3,4.200 v5.500 q-0.500,3.500 -3.800,3.500 q-2.800,0 -3,-3.500 v-5.500 q-2.800,-1.200 -2.800,-4.200 z"/><path d="M1294,352.500 q6,4 12,0" fill="none"/></g>
<path d="M1297,362 l5.500,-4.500 v4.500 q-0.500,3 -3,3 q-2.500,0 -2.500,-3 z" fill="#3a3a3a"/>
<text x="1316.1" y="358.7" font-size="13" font-weight="normal" fill="#444" textLength="43.3" lengthAdjust="spacingAndGlyphs" >Display</text>
<path d="M1294.200,388 h10.200 l-5.100,6.800 z" fill="#222"/>
<text x="1312.9" y="395.6" font-size="13.5" font-weight="bold" fill="#333" textLength="98.8" lengthAdjust="spacingAndGlyphs" >Preview mode</text>
<text x="1297.3" y="433.7" font-size="13" font-weight="normal" fill="#444" textLength="32.4" lengthAdjust="spacingAndGlyphs" >Mode</text>
<rect x="1399.500" y="412" width="175.200" height="32.600" rx="2" fill="#fff" stroke="#d9d9d9" stroke-width="1.400"/>
<text x="1408.6" y="433.7" font-size="13" font-weight="normal" fill="#333" textLength="148.4" lengthAdjust="spacingAndGlyphs" >Display upto current lay...</text>
<path d="M1561,427.300 h7.600 l-3.800,4.600 z" fill="#222"/>
<text x="1297.3" y="471.0" font-size="13" font-weight="normal" fill="#444" textLength="58.7" lengthAdjust="spacingAndGlyphs" >Animation</text>
<rect x="1399.500" y="449.800" width="175.200" height="32.600" rx="2" fill="#fff" stroke="#d9d9d9" stroke-width="1.400"/>
<text x="1408.6" y="471.0" font-size="13" font-weight="normal" fill="#333" textLength="109.8" lengthAdjust="spacingAndGlyphs" >Animate full model</text>
<path d="M1561,464.500 h7.600 l-3.800,4.600 z" fill="#222"/>
<text x="1297.3" y="508.9" font-size="13" font-weight="normal" fill="#444" textLength="54.7" lengthAdjust="spacingAndGlyphs" >Calculate</text>
<rect x="1399.500" y="487.600" width="79.600" height="32.400" rx="2" fill="#fff" stroke="#d9d9d9" stroke-width="1.400"/>
<text x="1404.0" y="508.9" font-size="13" font-weight="normal" fill="#333" textLength="69.4" lengthAdjust="spacingAndGlyphs" >Recalculate</text>
<rect x="1284" y="528" width="292.300" height="3.400" fill="#c8c8c8"/>
<path d="M1294.200,550.500 h10.200 l-5.100,6.800 z" fill="#222"/>
<text x="1313.5" y="557.9" font-size="13.5" font-weight="bold" fill="#333" textLength="61.7" lengthAdjust="spacingAndGlyphs" >Statistics</text>
<text x="1297.3" y="596.0" font-size="13" font-weight="normal" fill="#444" textLength="72.9" lengthAdjust="spacingAndGlyphs" >Layer count</text>
<text x="1404.0" y="596.0" font-size="13" font-weight="normal" fill="#444" textLength="21.5" lengthAdjust="spacingAndGlyphs" >350</text>
<text x="1297.3" y="633.0" font-size="13" font-weight="normal" fill="#444" textLength="78.5" lengthAdjust="spacingAndGlyphs" >Current layer</text>
<text x="1404.0" y="633.0" font-size="13" font-weight="normal" fill="#444" textLength="21.5" lengthAdjust="spacingAndGlyphs" >283</text>
<text x="1297.3" y="670.9" font-size="13" font-weight="normal" fill="#444" textLength="85.0" lengthAdjust="spacingAndGlyphs" >Current height</text>
<text x="1404.0" y="670.9" font-size="13" font-weight="normal" fill="#444" textLength="61.3" lengthAdjust="spacingAndGlyphs" >28.400mm</text>
<path d="M1282.500,710.400 H1593.500" stroke="#b9b9b9" stroke-width="1"/>
<circle cx="1299.700" cy="733.300" r="7.500" fill="#111"/><rect x="1298.500" y="731.800" width="2.600" height="5.600" fill="#f2f2f2"/><rect x="1297.500" y="731.800" width="2" height="1.300" fill="#f2f2f2"/><rect x="1297.300" y="736.400" width="5" height="1.300" fill="#f2f2f2"/><circle cx="1299.700" cy="729.300" r="1.500" fill="#f2f2f2"/>
<rect x="1504.500" y="722" width="74" height="22.400" fill="#e6e6e6" stroke="#adadad" stroke-width="1"/>
<text x="1520.6" y="738.3" font-size="15.5" font-weight="normal" fill="#5e5e5e" textLength="40.4" lengthAdjust="spacingAndGlyphs" >Close</text>
<g fill="#fff" stroke="#2a2a2a" stroke-width="1.700" stroke-linejoin="round" stroke-linecap="round">
<rect x="641.200" y="768.200" width="4.800" height="22" rx="2.400"/>
<path d="M650.5,779.2 L659.1,768.6 Q663.7,769.1 663.1,771.6 L656.3,779.2 L663.1,786.8 Q663.7,789.3 659.1,789.8 Z"/>
<circle cx="691.500" cy="779.2" r="9.300"/>
<path d="M703.5,779.2 L712.1,768.6 Q716.7,769.1 716.1,771.6 L709.3,779.2 L716.1,786.8 Q716.7,789.3 712.1,789.8 Z"/>
<path d="M742.0,779.2 L750.6,768.6 Q755.2,769.1 754.6,771.6 L747.8,779.2 L754.6,786.8 Q755.2,789.3 750.6,789.8 Z"/>
<path d="M757.0,779.2 L765.6,768.6 Q770.2,769.1 769.6,771.6 L762.8,779.2 L769.6,786.8 Q770.2,789.3 765.6,789.8 Z"/>
<path d="M789,762.500 Q788,760 790.800,760.800 L812,778.200 Q813.300,779.800 812,781.300 L790.800,799 Q788.300,800 788.300,797.500 Z"/>
<path d="M839.5,779.2 L830.9,768.6 Q826.3,769.1 826.9,771.6 L833.7,779.2 L826.9,786.8 Q826.3,789.3 830.9,789.8 Z"/>
<path d="M854.5,779.2 L845.9,768.6 Q841.3,769.1 841.9,771.6 L848.7,779.2 L841.9,786.8 Q841.3,789.3 845.9,789.8 Z"/>
<path d="M892.5,779.2 L883.9,768.6 Q879.3,769.1 879.9,771.6 L886.7,779.2 L879.9,786.8 Q879.3,789.3 883.9,789.8 Z"/>
<circle cx="904.700" cy="779.2" r="9.300"/>
<path d="M945.5,779.2 L936.9,768.6 Q932.3,769.1 932.9,771.6 L939.7,779.2 L932.9,786.8 Q932.3,789.3 936.9,789.8 Z"/>
<rect x="950" y="768.200" width="4.800" height="22" rx="2.400"/>
</g>
<defs><linearGradient id="slg" x1="0" x2="1"><stop offset="0" stop-color="#b8b8b8" stop-opacity="0"/><stop offset="0.120" stop-color="#b8b8b8"/><stop offset="0.850" stop-color="#b8b8b8"/><stop offset="1" stop-color="#b8b8b8" stop-opacity="0"/></linearGradient></defs>
<rect x="606" y="820.800" width="385" height="1.800" fill="url(#slg)"/>
<rect x="797.500" y="819.500" width="2.200" height="4" fill="#fff"/>
<circle cx="890" cy="820.800" r="8.300" fill="#fff" stroke="#2a2a2a" stroke-width="1.600"/>
<rect x="6.500" y="847" width="434" height="30.500" fill="#f2f2f2" stroke="#c6c6c6" stroke-width="1"/>
<text x="37.5" y="866.5" font-size="13" font-weight="normal" fill="#6a6a6a" textLength="70.5" lengthAdjust="spacingAndGlyphs" >COMMENTS</text>
<circle cx="420" cy="862" r="5.300" fill="#222"/><path d="M416.800,862 h6.400 M420,858.800 v6.400" stroke="#f2f2f2" stroke-width="1.500"/>
<path d="M435.500,856 V868.500 M437.800,856 V868.500" stroke="#999" stroke-width="1" fill="none"/>
<rect x="597" y="848" width="404" height="29.500" fill="#f2f2f2"/>
<path d="M619.500,861.800 Q621.500,865.800 611.700,866.800 Q605,867.200 602.500,866.500" fill="none" stroke="#333" stroke-width="1.500"/>
<path d="M603.500,862.200 Q601,863.300 600.800,864.600" fill="none" stroke="#333" stroke-width="1.500"/>
<path d="M600.300,866.800 l5.200,-3.600 v7 z" fill="#222"/>
<path d="M610.300,872.400 V858.300 H608 L611.700,853.300 L615.400,858.300 H613.100 V872.400 Z" fill="#fafafa" stroke="#333" stroke-width="1"/>
<path d="M603.500,862.200 Q607,860.600 610,860.500 M613.500,860.500 Q618,860.600 619.500,861.800" fill="none" stroke="#333" stroke-width="1.500"/>
<path d="M627.6,860.300 h6.600 l-3.300,4.200 z" fill="#333"/>
<path d="M643,859.500 L648.800,853.800 L652.500,856.600 L657.500,854.200 V859.500" fill="#d8d8d8" stroke="#444" stroke-width="1.200" stroke-linejoin="round"/>
<rect x="642.600" y="859.500" width="19" height="12.800" fill="#f0f0f0" stroke="#444" stroke-width="1.400"/>
<rect x="646.200" y="862.800" width="11.800" height="6" fill="#9aa2b4" stroke="#444" stroke-width="1.100"/>
<path d="M681.500,872.400 L677,865.800 Q674.400,862.600 675.600,861.500 Q677.200,860.700 679.200,863.200 L680.800,865.200 V856.800 Q682,854.600 683.200,856.800 V855.200 Q684.400,853 685.600,855.200 V855.600 Q686.800,853.600 688,855.600 V857.400 Q689.200,855.600 690.400,857.400 V861 Q692,858.500 693.600,860.200 Q694.600,861.500 693.400,865 Q692.500,869.500 690.500,872.400 Z" fill="#f6f6f6" stroke="#333" stroke-width="1.100" stroke-linejoin="round"/>
<path d="M683.200,857 V863 M685.600,855.600 V863 M688,856 V863 M690.400,858 V863.500" stroke="#333" stroke-width="0.900" fill="none"/>
<circle cx="713" cy="861.200" r="5.900" fill="#dcecf2" stroke="#444" stroke-width="1.400"/><path d="M717.500,866 L722.300,870.500" stroke="#333" stroke-width="3" stroke-linecap="round"/><path d="M724.200,853.500 v5.400 M721.500,856.200 h5.400 M721.500,861.200 h5.400" stroke="#333" stroke-width="1.100"/>
<rect x="740" y="853.500" width="18" height="16.500" fill="none" stroke="#555" stroke-width="1" stroke-dasharray="2 1.500"/><circle cx="748" cy="861.300" r="7" fill="#e6eef5" stroke="#444" stroke-width="1.300"/><path d="M753,866.800 L759,872.800" stroke="#333" stroke-width="3" stroke-linecap="round"/>
<path d="M766.5,860.300 h6.600 l-3.300,4.200 z" fill="#333"/>
<rect x="791" y="853.500" width="19.500" height="14.500" rx="1.500" fill="#e4e4e4" stroke="#444" stroke-width="1.200"/><rect x="793.500" y="856" width="14.500" height="9.500" fill="#7aa2d8"/><path d="M797.500,868 h6.500 l1.500,3.500 h-9.500 z" fill="#9a9a9a" stroke="#444" stroke-width="0.800"/>
<path d="M814.2,860.300 h6.600 l-3.300,4.200 z" fill="#333"/>
<rect x="829.500" y="853.500" width="19.500" height="18.500" fill="#c9c9c9" stroke="#444" stroke-width="1.100"/><path d="M833.400,853.500 v18.500 M837.300,853.500 v18.500 M841.200,853.500 v18.500 M845.100,853.500 v18.500 M829.500,857.200 h19.500 M829.500,860.900 h19.500 M829.500,864.600 h19.500 M829.500,868.300 h19.500" stroke="#4a4a4a" stroke-width="0.800"/>
<path d="M853.5,860.300 h6.600 l-3.300,4.200 z" fill="#333"/>
<g stroke="#3a3a3a" stroke-width="1.100" fill="#e6e6e6"><path d="M883.500,858.500 L888,853.500 H899 V866.500 L894.500,871.500"/><rect x="878.500" y="858.500" width="16" height="13" fill="#9db4d8"/></g><ellipse cx="886" cy="865.500" rx="4" ry="2.500" fill="#e8e8e8" stroke="#333" stroke-width="0.800" transform="rotate(-35 886 865.500)"/>
<path d="M902.0,860.300 h6.600 l-3.300,4.200 z" fill="#333"/>
<g fill="#9ab8e6" stroke="#2a4f9a" stroke-width="1.200"><rect x="919" y="855" width="15" height="3.800"/><rect x="919" y="861" width="15" height="3.800"/><rect x="919" y="867" width="15" height="3.800"/></g><path d="M917,858.800 h19.500 M917,864.800 h19.500 M917,861 h2 M917,867 h2" stroke="#1f3f8a" stroke-width="1.200"/>
<path d="M940.6,860.300 h6.600 l-3.300,4.200 z" fill="#333"/>
<g fill="none" stroke="#2a82e0" stroke-width="2.600"><path d="M958.500,860.500 a8,8 0 0 1 14.500,-2.500"/><path d="M973.500,864.500 a8,8 0 0 1 -14.500,2.500"/></g><path d="M975.800,853.500 v7.300 h-7.300 z" fill="#2a82e0"/><path d="M956.300,871.800 v-7.300 h7.300 z" fill="#1a3f8a"/>
<path d="M979.9,860.300 h6.600 l-3.300,4.200 z" fill="#333"/>
<path d="M1574,860.500 h11 v8 h-1.500 v2.500 l-2.800,-2.500 h-6.700 z" fill="#86ba44" stroke="#587a34" stroke-width="0.900"/><path d="M1567.500,855.500 h11.500 v8.500 h-7.500 l-2.800,2.500 v-2.500 h-1.200 z" fill="#86ba44" stroke="#587a34" stroke-width="0.900"/>
</svg>
<!--DIALOG-->
<!--BOTTOM-->
</div>

<div id="greenbar"></div>
<div class="abs" id="mark" style="left:1287.500px;top:883px;width:7.500px;height:14.500px;background:#000"></div>
</div>
</body>
</html>
